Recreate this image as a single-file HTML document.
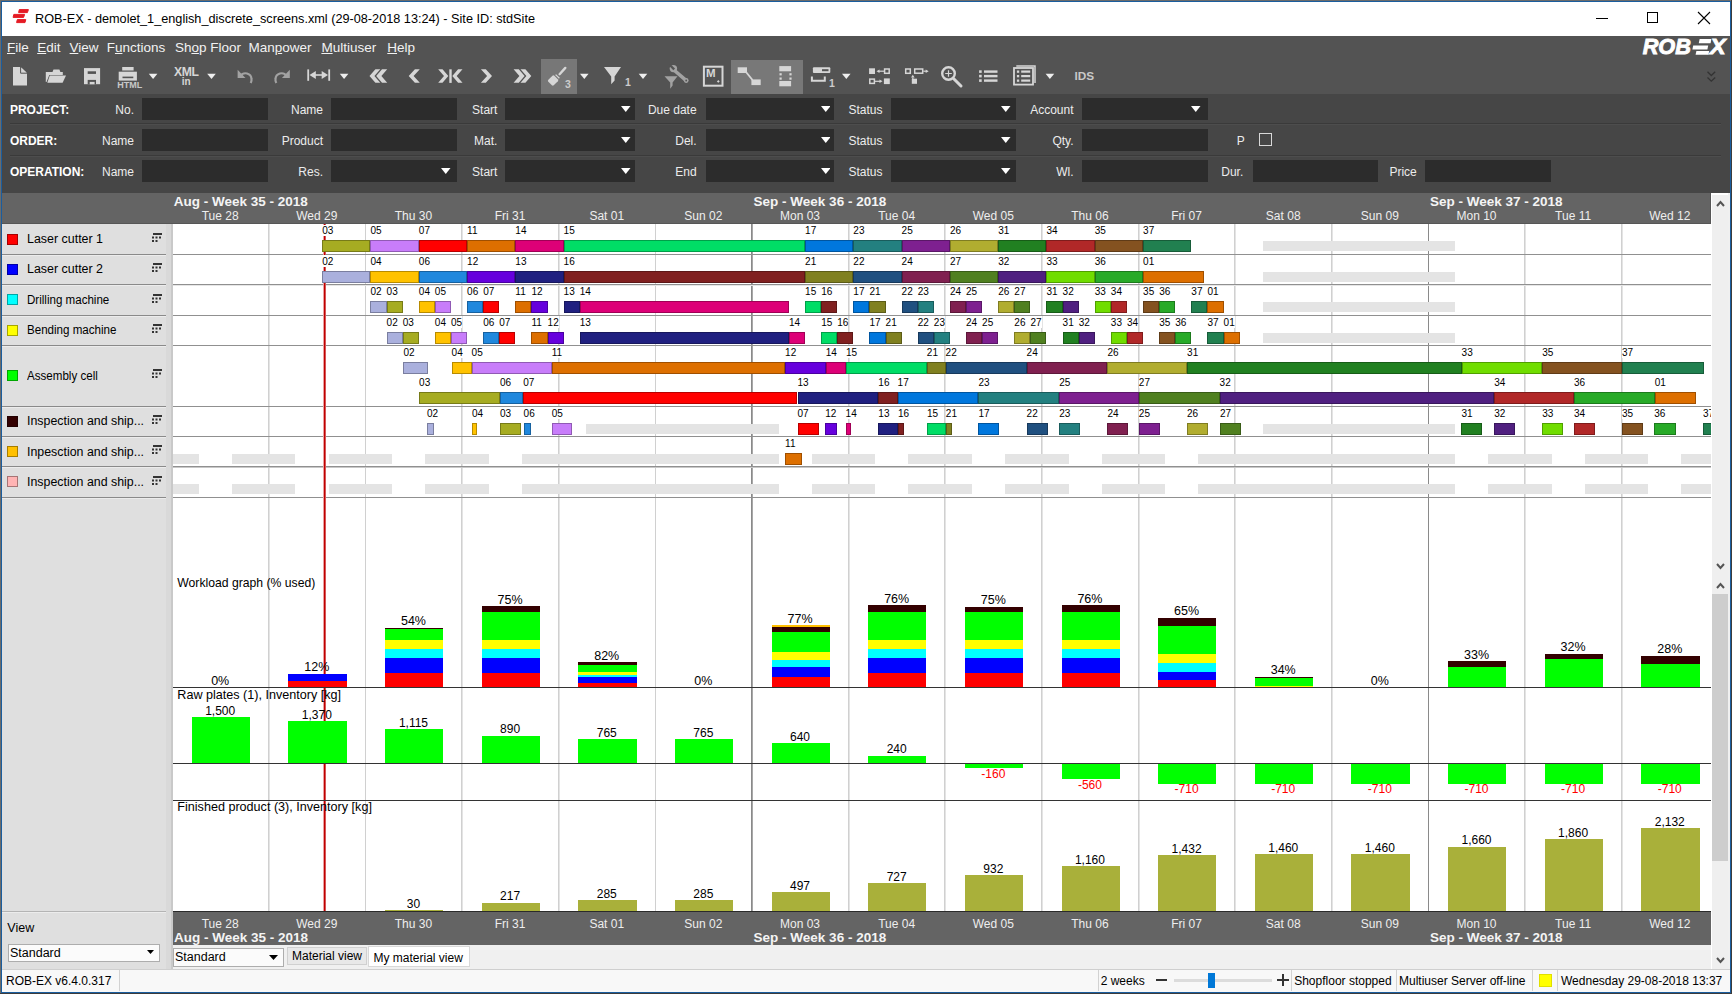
<!DOCTYPE html>
<html><head><meta charset="utf-8"><title>ROB-EX</title><style>
html,body{margin:0;padding:0;}
body{width:1732px;height:994px;overflow:hidden;position:relative;font-family:"Liberation Sans",sans-serif;}
div{position:absolute;box-sizing:border-box;}
.t{white-space:pre;line-height:1;}
</style></head><body>
<div style="left:0.00px;top:0.00px;width:1732.00px;height:994.00px;background:#f0f0f0;"></div>
<div style="left:2.00px;top:2.00px;width:1728.00px;height:34.00px;background:#ffffff;"></div>
<div style="left:2.00px;top:36.00px;width:1728.00px;height:58.00px;background:#535353;"></div>
<div style="left:2.00px;top:94.00px;width:1728.00px;height:99.00px;background:#464646;"></div>
<div style="left:2.00px;top:224.00px;width:164.00px;height:745.00px;background:#dfdfdf;"></div>
<div style="left:166.00px;top:224.00px;width:5.00px;height:745.00px;background:#d9d9d9;"></div>
<div style="left:171.00px;top:224.00px;width:2.00px;height:745.00px;background:#c9c9c9;"></div>
<div style="left:173.00px;top:224.00px;width:1538.00px;height:687.00px;background:#ffffff;"></div>
<div style="left:2.00px;top:193.00px;width:1709.00px;height:31.00px;background:#646464;"></div>
<div style="left:2.00px;top:223.00px;width:1709.00px;height:1.00px;background:#565656;"></div>
<div style="left:1710.00px;top:193.00px;width:1.00px;height:31.00px;background:#565656;"></div>
<svg style="position:absolute;left:0px;top:0px;" width="40" height="30" viewBox="0 0 40 30"><g fill="#e51b24" stroke="#e51b24" stroke-width="1" stroke-linejoin="round"><polygon points="19.3,9.6 28.4,9.6 27.4,12.6 18.6,12.6"/><polygon points="13.8,14.4 24.6,14.4 23.6,17.4 13.1,17.4"/><polygon points="17.3,19.6 25.8,19.6 25,22.6 16.6,22.6"/></g></svg>
<div class="t" style="left:35.00px;top:12.75px;font-size:12.7px;color:#000;font-weight:normal;">ROB-EX - demolet_1_english_discrete_screens.xml (29-08-2018 13:24) - Site ID: stdSite</div>
<div style="left:1596.00px;top:18.00px;width:12.00px;height:1.00px;background:#000;"></div>
<div style="left:1647.00px;top:12.00px;width:11.00px;height:11.00px;background:transparent;border:1px solid #000;"></div>
<svg style="position:absolute;left:1697px;top:11px;" width="14" height="14" viewBox="0 0 14 14"><path d="M1,1 L13,13 M13,1 L1,13" stroke="#000" stroke-width="1.1"/></svg>
<div class="t" style="left:7.00px;top:41.47px;font-size:13.5px;color:#f2f2f2;font-weight:normal;"><u>F</u>ile</div>
<div class="t" style="left:37.20px;top:41.47px;font-size:13.5px;color:#f2f2f2;font-weight:normal;"><u>E</u>dit</div>
<div class="t" style="left:69.60px;top:41.47px;font-size:13.5px;color:#f2f2f2;font-weight:normal;"><u>V</u>iew</div>
<div class="t" style="left:106.70px;top:41.47px;font-size:13.5px;color:#f2f2f2;font-weight:normal;">F<u>u</u>nctions</div>
<div class="t" style="left:174.90px;top:41.47px;font-size:13.5px;color:#f2f2f2;font-weight:normal;">Sh<u>o</u>p Floor</div>
<div class="t" style="left:248.40px;top:41.47px;font-size:13.5px;color:#f2f2f2;font-weight:normal;">Man<u>p</u>ower</div>
<div class="t" style="left:321.40px;top:41.47px;font-size:13.5px;color:#f2f2f2;font-weight:normal;"><u>M</u>ultiuser</div>
<div class="t" style="left:387.30px;top:41.47px;font-size:13.5px;color:#f2f2f2;font-weight:normal;"><u>H</u>elp</div>
<div style="left:10.00px;top:123.00px;width:1711.00px;height:1.00px;background:#3a3a3a;"></div>
<div style="left:10.00px;top:124.00px;width:1711.00px;height:1.00px;background:#4d4d4d;"></div>
<div style="left:10.00px;top:155.00px;width:1711.00px;height:1.00px;background:#3a3a3a;"></div>
<div style="left:10.00px;top:156.00px;width:1711.00px;height:1.00px;background:#4d4d4d;"></div>
<div class="t" style="left:9.90px;top:103.54px;font-size:12px;color:#ffffff;font-weight:bold;">PROJECT:</div>
<div class="t" style="left:9.90px;top:134.64px;font-size:12px;color:#ffffff;font-weight:bold;">ORDER:</div>
<div class="t" style="left:9.90px;top:166.34px;font-size:12px;color:#ffffff;font-weight:bold;">OPERATION:</div>
<div class="t" style="left:-166.00px;top:103.54px;width:300px;text-align:right;font-size:12px;color:#ececec;font-weight:normal;">No.</div>
<div style="left:142.40px;top:97.70px;width:126.10px;height:22.00px;background:#2c2c2c;"></div>
<div class="t" style="left:-166.00px;top:134.64px;width:300px;text-align:right;font-size:12px;color:#ececec;font-weight:normal;">Name</div>
<div style="left:142.40px;top:129.00px;width:126.10px;height:22.00px;background:#2c2c2c;"></div>
<div class="t" style="left:-166.00px;top:166.34px;width:300px;text-align:right;font-size:12px;color:#ececec;font-weight:normal;">Name</div>
<div style="left:142.40px;top:160.20px;width:126.10px;height:22.30px;background:#2c2c2c;"></div>
<div class="t" style="left:23.00px;top:103.54px;width:300px;text-align:right;font-size:12px;color:#ececec;font-weight:normal;">Name</div>
<div style="left:331.10px;top:97.70px;width:125.70px;height:22.00px;background:#2c2c2c;"></div>
<div class="t" style="left:23.00px;top:134.64px;width:300px;text-align:right;font-size:12px;color:#ececec;font-weight:normal;">Product</div>
<div style="left:331.10px;top:129.00px;width:125.70px;height:22.00px;background:#2c2c2c;"></div>
<div class="t" style="left:23.00px;top:166.34px;width:300px;text-align:right;font-size:12px;color:#ececec;font-weight:normal;">Res.</div>
<div style="left:331.10px;top:160.20px;width:125.70px;height:22.30px;background:#2c2c2c;"></div>
<svg style="position:absolute;left:441.3px;top:168.35px;" width="9.5" height="6" viewBox="0 0 9.5 6"><polygon points="0,0 9.5,0 4.75,6" fill="#ffffff"/></svg>
<div class="t" style="left:197.40px;top:103.54px;width:300px;text-align:right;font-size:12px;color:#ececec;font-weight:normal;">Start</div>
<div style="left:505.30px;top:97.70px;width:129.30px;height:22.00px;background:#2c2c2c;"></div>
<svg style="position:absolute;left:621.4px;top:105.7px;" width="9.5" height="6" viewBox="0 0 9.5 6"><polygon points="0,0 9.5,0 4.75,6" fill="#ffffff"/></svg>
<div class="t" style="left:197.40px;top:134.64px;width:300px;text-align:right;font-size:12px;color:#ececec;font-weight:normal;">Mat.</div>
<div style="left:505.30px;top:129.00px;width:129.30px;height:22.00px;background:#2c2c2c;"></div>
<svg style="position:absolute;left:621.4px;top:137.0px;" width="9.5" height="6" viewBox="0 0 9.5 6"><polygon points="0,0 9.5,0 4.75,6" fill="#ffffff"/></svg>
<div class="t" style="left:197.40px;top:166.34px;width:300px;text-align:right;font-size:12px;color:#ececec;font-weight:normal;">Start</div>
<div style="left:505.30px;top:160.20px;width:129.30px;height:22.30px;background:#2c2c2c;"></div>
<svg style="position:absolute;left:621.4px;top:168.35px;" width="9.5" height="6" viewBox="0 0 9.5 6"><polygon points="0,0 9.5,0 4.75,6" fill="#ffffff"/></svg>
<div class="t" style="left:396.60px;top:103.54px;width:300px;text-align:right;font-size:12px;color:#ececec;font-weight:normal;">Due date</div>
<div style="left:705.80px;top:97.70px;width:128.70px;height:22.00px;background:#2c2c2c;"></div>
<svg style="position:absolute;left:820.8px;top:105.7px;" width="9.5" height="6" viewBox="0 0 9.5 6"><polygon points="0,0 9.5,0 4.75,6" fill="#ffffff"/></svg>
<div class="t" style="left:396.60px;top:134.64px;width:300px;text-align:right;font-size:12px;color:#ececec;font-weight:normal;">Del.</div>
<div style="left:705.80px;top:129.00px;width:128.70px;height:22.00px;background:#2c2c2c;"></div>
<svg style="position:absolute;left:820.8px;top:137.0px;" width="9.5" height="6" viewBox="0 0 9.5 6"><polygon points="0,0 9.5,0 4.75,6" fill="#ffffff"/></svg>
<div class="t" style="left:396.60px;top:166.34px;width:300px;text-align:right;font-size:12px;color:#ececec;font-weight:normal;">End</div>
<div style="left:705.80px;top:160.20px;width:128.70px;height:22.30px;background:#2c2c2c;"></div>
<svg style="position:absolute;left:820.8px;top:168.35px;" width="9.5" height="6" viewBox="0 0 9.5 6"><polygon points="0,0 9.5,0 4.75,6" fill="#ffffff"/></svg>
<div class="t" style="left:582.50px;top:103.54px;width:300px;text-align:right;font-size:12px;color:#ececec;font-weight:normal;">Status</div>
<div style="left:891.00px;top:97.70px;width:125.40px;height:22.00px;background:#2c2c2c;"></div>
<svg style="position:absolute;left:1001.0px;top:105.7px;" width="9.5" height="6" viewBox="0 0 9.5 6"><polygon points="0,0 9.5,0 4.75,6" fill="#ffffff"/></svg>
<div class="t" style="left:582.50px;top:134.64px;width:300px;text-align:right;font-size:12px;color:#ececec;font-weight:normal;">Status</div>
<div style="left:891.00px;top:129.00px;width:125.40px;height:22.00px;background:#2c2c2c;"></div>
<svg style="position:absolute;left:1001.0px;top:137.0px;" width="9.5" height="6" viewBox="0 0 9.5 6"><polygon points="0,0 9.5,0 4.75,6" fill="#ffffff"/></svg>
<div class="t" style="left:582.50px;top:166.34px;width:300px;text-align:right;font-size:12px;color:#ececec;font-weight:normal;">Status</div>
<div style="left:891.00px;top:160.20px;width:125.40px;height:22.30px;background:#2c2c2c;"></div>
<svg style="position:absolute;left:1001.0px;top:168.35px;" width="9.5" height="6" viewBox="0 0 9.5 6"><polygon points="0,0 9.5,0 4.75,6" fill="#ffffff"/></svg>
<div class="t" style="left:773.50px;top:103.54px;width:300px;text-align:right;font-size:12px;color:#ececec;font-weight:normal;">Account</div>
<div style="left:1082.00px;top:97.70px;width:125.50px;height:22.00px;background:#2c2c2c;"></div>
<svg style="position:absolute;left:1191.3px;top:105.7px;" width="9.5" height="6" viewBox="0 0 9.5 6"><polygon points="0,0 9.5,0 4.75,6" fill="#ffffff"/></svg>
<div class="t" style="left:773.50px;top:134.64px;width:300px;text-align:right;font-size:12px;color:#ececec;font-weight:normal;">Qty.</div>
<div style="left:1082.00px;top:129.00px;width:125.50px;height:22.00px;background:#2c2c2c;"></div>
<div class="t" style="left:773.50px;top:166.34px;width:300px;text-align:right;font-size:12px;color:#ececec;font-weight:normal;">Wl.</div>
<div style="left:1082.00px;top:160.20px;width:125.50px;height:22.30px;background:#2c2c2c;"></div>
<div class="t" style="left:1236.80px;top:134.64px;font-size:12px;color:#ececec;font-weight:normal;">P</div>
<div style="left:1259.00px;top:133.00px;width:13.00px;height:13.00px;background:transparent;border:1px solid #d8d8d8;"></div>
<div class="t" style="left:943.30px;top:166.34px;width:300px;text-align:right;font-size:12px;color:#ececec;font-weight:normal;">Dur.</div>
<div style="left:1252.50px;top:160.20px;width:125.90px;height:22.30px;background:#2c2c2c;"></div>
<div class="t" style="left:1116.80px;top:166.34px;width:300px;text-align:right;font-size:12px;color:#ececec;font-weight:normal;">Price</div>
<div style="left:1425.40px;top:160.20px;width:125.90px;height:22.30px;background:#2c2c2c;"></div>
<div class="t" style="left:70.18px;top:210.24px;width:300px;text-align:center;font-size:12px;color:#eeeeee;font-weight:normal;">Tue 28</div>
<div class="t" style="left:166.82px;top:210.24px;width:300px;text-align:center;font-size:12px;color:#eeeeee;font-weight:normal;">Wed 29</div>
<div class="t" style="left:263.46px;top:210.24px;width:300px;text-align:center;font-size:12px;color:#eeeeee;font-weight:normal;">Thu 30</div>
<div class="t" style="left:360.10px;top:210.24px;width:300px;text-align:center;font-size:12px;color:#eeeeee;font-weight:normal;">Fri 31</div>
<div class="t" style="left:456.74px;top:210.24px;width:300px;text-align:center;font-size:12px;color:#eeeeee;font-weight:normal;">Sat 01</div>
<div class="t" style="left:553.38px;top:210.24px;width:300px;text-align:center;font-size:12px;color:#eeeeee;font-weight:normal;">Sun 02</div>
<div class="t" style="left:650.02px;top:210.24px;width:300px;text-align:center;font-size:12px;color:#eeeeee;font-weight:normal;">Mon 03</div>
<div class="t" style="left:746.66px;top:210.24px;width:300px;text-align:center;font-size:12px;color:#eeeeee;font-weight:normal;">Tue 04</div>
<div class="t" style="left:843.30px;top:210.24px;width:300px;text-align:center;font-size:12px;color:#eeeeee;font-weight:normal;">Wed 05</div>
<div class="t" style="left:939.94px;top:210.24px;width:300px;text-align:center;font-size:12px;color:#eeeeee;font-weight:normal;">Thu 06</div>
<div class="t" style="left:1036.58px;top:210.24px;width:300px;text-align:center;font-size:12px;color:#eeeeee;font-weight:normal;">Fri 07</div>
<div class="t" style="left:1133.22px;top:210.24px;width:300px;text-align:center;font-size:12px;color:#eeeeee;font-weight:normal;">Sat 08</div>
<div class="t" style="left:1229.86px;top:210.24px;width:300px;text-align:center;font-size:12px;color:#eeeeee;font-weight:normal;">Sun 09</div>
<div class="t" style="left:1326.50px;top:210.24px;width:300px;text-align:center;font-size:12px;color:#eeeeee;font-weight:normal;">Mon 10</div>
<div class="t" style="left:1423.14px;top:210.24px;width:300px;text-align:center;font-size:12px;color:#eeeeee;font-weight:normal;">Tue 11</div>
<div class="t" style="left:1519.78px;top:210.24px;width:300px;text-align:center;font-size:12px;color:#eeeeee;font-weight:normal;">Wed 12</div>
<div class="t" style="left:173.70px;top:194.57px;font-size:13.5px;color:#f4f4f4;font-weight:bold;">Aug - Week 35 - 2018</div>
<div class="t" style="left:753.60px;top:194.57px;font-size:13.5px;color:#f4f4f4;font-weight:bold;">Sep - Week 36 - 2018</div>
<div class="t" style="left:1430.00px;top:194.57px;font-size:13.5px;color:#f4f4f4;font-weight:bold;">Sep - Week 37 - 2018</div>
<div style="left:268.00px;top:224.00px;width:1.00px;height:687.00px;background:#d0d0d0;"></div>
<div style="left:269.00px;top:224.00px;width:1.00px;height:687.00px;background:#e4e4e4;"></div>
<div style="left:365.00px;top:224.00px;width:1.00px;height:687.00px;background:#d0d0d0;"></div>
<div style="left:461.00px;top:224.00px;width:1.00px;height:687.00px;background:#d0d0d0;"></div>
<div style="left:462.00px;top:224.00px;width:1.00px;height:687.00px;background:#e4e4e4;"></div>
<div style="left:558.00px;top:224.00px;width:1.00px;height:687.00px;background:#d0d0d0;"></div>
<div style="left:559.00px;top:224.00px;width:1.00px;height:687.00px;background:#e4e4e4;"></div>
<div style="left:655.00px;top:224.00px;width:1.00px;height:687.00px;background:#d0d0d0;"></div>
<div style="left:751.00px;top:224.00px;width:1.00px;height:687.00px;background:#8a8a8a;"></div>
<div style="left:752.00px;top:224.00px;width:1.00px;height:687.00px;background:#a8a8a8;"></div>
<div style="left:848.00px;top:224.00px;width:1.00px;height:687.00px;background:#d0d0d0;"></div>
<div style="left:849.00px;top:224.00px;width:1.00px;height:687.00px;background:#e4e4e4;"></div>
<div style="left:944.00px;top:224.00px;width:1.00px;height:687.00px;background:#d0d0d0;"></div>
<div style="left:945.00px;top:224.00px;width:1.00px;height:687.00px;background:#e4e4e4;"></div>
<div style="left:1041.00px;top:224.00px;width:1.00px;height:687.00px;background:#d0d0d0;"></div>
<div style="left:1042.00px;top:224.00px;width:1.00px;height:687.00px;background:#e4e4e4;"></div>
<div style="left:1138.00px;top:224.00px;width:1.00px;height:687.00px;background:#d0d0d0;"></div>
<div style="left:1139.00px;top:224.00px;width:1.00px;height:687.00px;background:#e4e4e4;"></div>
<div style="left:1234.00px;top:224.00px;width:1.00px;height:687.00px;background:#d0d0d0;"></div>
<div style="left:1235.00px;top:224.00px;width:1.00px;height:687.00px;background:#e4e4e4;"></div>
<div style="left:1331.00px;top:224.00px;width:1.00px;height:687.00px;background:#d0d0d0;"></div>
<div style="left:1332.00px;top:224.00px;width:1.00px;height:687.00px;background:#e4e4e4;"></div>
<div style="left:1428.00px;top:224.00px;width:1.00px;height:687.00px;background:#8a8a8a;"></div>
<div style="left:1524.00px;top:224.00px;width:1.00px;height:687.00px;background:#d0d0d0;"></div>
<div style="left:1525.00px;top:224.00px;width:1.00px;height:687.00px;background:#e4e4e4;"></div>
<div style="left:1621.00px;top:224.00px;width:1.00px;height:687.00px;background:#d0d0d0;"></div>
<div style="left:1622.00px;top:224.00px;width:1.00px;height:687.00px;background:#e4e4e4;"></div>
<div style="left:173.00px;top:285.00px;width:1538.00px;height:1.00px;background:#e6e6e6;"></div>
<div style="left:173.00px;top:467.00px;width:1538.00px;height:1.00px;background:#c8c8c8;"></div>
<div style="left:173.00px;top:254.00px;width:1538.00px;height:1.00px;background:#909090;"></div>
<div style="left:2.00px;top:254.00px;width:164.00px;height:1.00px;background:#8a8a8a;"></div>
<div style="left:2.00px;top:255.00px;width:164.00px;height:1.00px;background:#ececec;"></div>
<div style="left:173.00px;top:284.00px;width:1538.00px;height:1.00px;background:#909090;"></div>
<div style="left:2.00px;top:284.00px;width:164.00px;height:1.00px;background:#8a8a8a;"></div>
<div style="left:2.00px;top:285.00px;width:164.00px;height:1.00px;background:#ececec;"></div>
<div style="left:173.00px;top:315.00px;width:1538.00px;height:1.00px;background:#909090;"></div>
<div style="left:2.00px;top:315.00px;width:164.00px;height:1.00px;background:#8a8a8a;"></div>
<div style="left:2.00px;top:316.00px;width:164.00px;height:1.00px;background:#ececec;"></div>
<div style="left:173.00px;top:345.00px;width:1538.00px;height:1.00px;background:#909090;"></div>
<div style="left:2.00px;top:345.00px;width:164.00px;height:1.00px;background:#8a8a8a;"></div>
<div style="left:2.00px;top:346.00px;width:164.00px;height:1.00px;background:#ececec;"></div>
<div style="left:173.00px;top:406.00px;width:1538.00px;height:1.00px;background:#909090;"></div>
<div style="left:2.00px;top:406.00px;width:164.00px;height:1.00px;background:#8a8a8a;"></div>
<div style="left:2.00px;top:407.00px;width:164.00px;height:1.00px;background:#ececec;"></div>
<div style="left:173.00px;top:436.00px;width:1538.00px;height:1.00px;background:#909090;"></div>
<div style="left:2.00px;top:436.00px;width:164.00px;height:1.00px;background:#8a8a8a;"></div>
<div style="left:2.00px;top:437.00px;width:164.00px;height:1.00px;background:#ececec;"></div>
<div style="left:173.00px;top:466.00px;width:1538.00px;height:1.00px;background:#909090;"></div>
<div style="left:2.00px;top:466.00px;width:164.00px;height:1.00px;background:#8a8a8a;"></div>
<div style="left:2.00px;top:467.00px;width:164.00px;height:1.00px;background:#ececec;"></div>
<div style="left:173.00px;top:497.00px;width:1538.00px;height:1.00px;background:#909090;"></div>
<div style="left:2.00px;top:497.00px;width:164.00px;height:1.00px;background:#8a8a8a;"></div>
<div style="left:2.00px;top:498.00px;width:164.00px;height:1.00px;background:#ececec;"></div>
<div style="left:7.00px;top:233.50px;width:11.00px;height:11.00px;background:#ff0000;border:1px solid rgba(0,0,0,0.35);"></div>
<div class="t" style="left:26.80px;top:233.42px;font-size:12.5px;color:#000;font-weight:normal;transform:scaleX(0.9945);transform-origin:0 0;">Laser cutter 1</div>
<svg style="position:absolute;left:152px;top:233px;" width="10" height="10" viewBox="0 0 10 10"><rect x="1" y="0" width="9" height="2" fill="#333"/><rect x="0" y="3.5" width="2" height="2" fill="#333"/><rect x="3.5" y="3.5" width="2" height="2" fill="#333"/><rect x="7" y="3.5" width="2" height="2" fill="#333"/><rect x="0" y="7" width="2" height="2" fill="#333"/><rect x="3.5" y="7" width="2" height="2" fill="#333"/></svg>
<div style="left:7.00px;top:263.50px;width:11.00px;height:11.00px;background:#0000ff;border:1px solid rgba(0,0,0,0.35);"></div>
<div class="t" style="left:26.80px;top:263.42px;font-size:12.5px;color:#000;font-weight:normal;transform:scaleX(0.9945);transform-origin:0 0;">Laser cutter 2</div>
<svg style="position:absolute;left:152px;top:263px;" width="10" height="10" viewBox="0 0 10 10"><rect x="1" y="0" width="9" height="2" fill="#333"/><rect x="0" y="3.5" width="2" height="2" fill="#333"/><rect x="3.5" y="3.5" width="2" height="2" fill="#333"/><rect x="7" y="3.5" width="2" height="2" fill="#333"/><rect x="0" y="7" width="2" height="2" fill="#333"/><rect x="3.5" y="7" width="2" height="2" fill="#333"/></svg>
<div style="left:7.00px;top:294.00px;width:11.00px;height:11.00px;background:#00ffff;border:1px solid rgba(0,0,0,0.35);"></div>
<div class="t" style="left:26.80px;top:293.92px;font-size:12.5px;color:#000;font-weight:normal;transform:scaleX(0.9256);transform-origin:0 0;">Drilling machine</div>
<svg style="position:absolute;left:152px;top:294px;" width="10" height="10" viewBox="0 0 10 10"><rect x="1" y="0" width="9" height="2" fill="#333"/><rect x="0" y="3.5" width="2" height="2" fill="#333"/><rect x="3.5" y="3.5" width="2" height="2" fill="#333"/><rect x="7" y="3.5" width="2" height="2" fill="#333"/><rect x="0" y="7" width="2" height="2" fill="#333"/><rect x="3.5" y="7" width="2" height="2" fill="#333"/></svg>
<div style="left:7.00px;top:324.50px;width:11.00px;height:11.00px;background:#ffff00;border:1px solid rgba(0,0,0,0.35);"></div>
<div class="t" style="left:26.80px;top:324.42px;font-size:12.5px;color:#000;font-weight:normal;transform:scaleX(0.9266);transform-origin:0 0;">Bending machine</div>
<svg style="position:absolute;left:152px;top:324px;" width="10" height="10" viewBox="0 0 10 10"><rect x="1" y="0" width="9" height="2" fill="#333"/><rect x="0" y="3.5" width="2" height="2" fill="#333"/><rect x="3.5" y="3.5" width="2" height="2" fill="#333"/><rect x="7" y="3.5" width="2" height="2" fill="#333"/><rect x="0" y="7" width="2" height="2" fill="#333"/><rect x="3.5" y="7" width="2" height="2" fill="#333"/></svg>
<div style="left:7.00px;top:369.70px;width:11.00px;height:11.00px;background:#00ff00;border:1px solid rgba(0,0,0,0.35);"></div>
<div class="t" style="left:26.80px;top:369.62px;font-size:12.5px;color:#000;font-weight:normal;transform:scaleX(0.9266);transform-origin:0 0;">Assembly cell</div>
<svg style="position:absolute;left:152px;top:369px;" width="10" height="10" viewBox="0 0 10 10"><rect x="1" y="0" width="9" height="2" fill="#333"/><rect x="0" y="3.5" width="2" height="2" fill="#333"/><rect x="3.5" y="3.5" width="2" height="2" fill="#333"/><rect x="7" y="3.5" width="2" height="2" fill="#333"/><rect x="0" y="7" width="2" height="2" fill="#333"/><rect x="3.5" y="7" width="2" height="2" fill="#333"/></svg>
<div style="left:7.00px;top:415.50px;width:11.00px;height:11.00px;background:#330000;border:1px solid rgba(0,0,0,0.35);"></div>
<div class="t" style="left:26.80px;top:415.42px;font-size:12.5px;color:#000;font-weight:normal;transform:scaleX(0.9905);transform-origin:0 0;">Inspection and ship...</div>
<svg style="position:absolute;left:152px;top:415px;" width="10" height="10" viewBox="0 0 10 10"><rect x="1" y="0" width="9" height="2" fill="#333"/><rect x="0" y="3.5" width="2" height="2" fill="#333"/><rect x="3.5" y="3.5" width="2" height="2" fill="#333"/><rect x="7" y="3.5" width="2" height="2" fill="#333"/><rect x="0" y="7" width="2" height="2" fill="#333"/><rect x="3.5" y="7" width="2" height="2" fill="#333"/></svg>
<div style="left:7.00px;top:445.80px;width:11.00px;height:11.00px;background:#ffc000;border:1px solid rgba(0,0,0,0.35);"></div>
<div class="t" style="left:26.80px;top:445.72px;font-size:12.5px;color:#000;font-weight:normal;transform:scaleX(0.9905);transform-origin:0 0;">Inpesction and ship...</div>
<svg style="position:absolute;left:152px;top:445px;" width="10" height="10" viewBox="0 0 10 10"><rect x="1" y="0" width="9" height="2" fill="#333"/><rect x="0" y="3.5" width="2" height="2" fill="#333"/><rect x="3.5" y="3.5" width="2" height="2" fill="#333"/><rect x="7" y="3.5" width="2" height="2" fill="#333"/><rect x="0" y="7" width="2" height="2" fill="#333"/><rect x="3.5" y="7" width="2" height="2" fill="#333"/></svg>
<div style="left:7.00px;top:476.20px;width:11.00px;height:11.00px;background:#ffb4b4;border:1px solid rgba(0,0,0,0.35);"></div>
<div class="t" style="left:26.80px;top:476.12px;font-size:12.5px;color:#000;font-weight:normal;transform:scaleX(0.9905);transform-origin:0 0;">Inspection and ship...</div>
<svg style="position:absolute;left:152px;top:476px;" width="10" height="10" viewBox="0 0 10 10"><rect x="1" y="0" width="9" height="2" fill="#333"/><rect x="0" y="3.5" width="2" height="2" fill="#333"/><rect x="3.5" y="3.5" width="2" height="2" fill="#333"/><rect x="7" y="3.5" width="2" height="2" fill="#333"/><rect x="0" y="7" width="2" height="2" fill="#333"/><rect x="3.5" y="7" width="2" height="2" fill="#333"/></svg>
<div style="left:323.00px;top:224.00px;width:1.00px;height:687.00px;background:#eaa0a0;"></div>
<div style="left:324.00px;top:224.00px;width:1.00px;height:687.00px;background:#c00000;"></div>
<div style="left:325.00px;top:224.00px;width:1.00px;height:687.00px;background:#d65858;"></div>
<div style="left:1262.90px;top:241.00px;width:192.28px;height:10.00px;background:#e4e4e4;"></div>
<div style="left:322.20px;top:240.00px;width:48.29px;height:12.00px;background:#a6ac22;border:1px solid #777b18;"></div>
<div class="t" style="left:322.20px;top:224.70px;height:11.5px;padding-top:1.5px;background:#fff;font-size:10px;color:#000;letter-spacing:0.05px">03</div>
<div style="left:370.49px;top:240.00px;width:48.28px;height:12.00px;background:#c87dfa;border:1px solid #905ab4;"></div>
<div class="t" style="left:370.49px;top:224.70px;height:11.5px;padding-top:1.5px;background:#fff;font-size:10px;color:#000;letter-spacing:0.05px">05</div>
<div style="left:418.77px;top:240.00px;width:48.28px;height:12.00px;background:#ff0000;border:1px solid #b70000;"></div>
<div class="t" style="left:418.77px;top:224.70px;height:11.5px;padding-top:1.5px;background:#fff;font-size:10px;color:#000;letter-spacing:0.05px">07</div>
<div style="left:467.05px;top:240.00px;width:48.28px;height:12.00px;background:#dd6f00;border:1px solid #9f4f00;"></div>
<div class="t" style="left:467.05px;top:224.70px;height:11.5px;padding-top:1.5px;background:#fff;font-size:10px;color:#000;letter-spacing:0.05px">11</div>
<div style="left:515.34px;top:240.00px;width:48.29px;height:12.00px;background:#dd0077;border:1px solid #9f0055;"></div>
<div class="t" style="left:515.34px;top:224.70px;height:11.5px;padding-top:1.5px;background:#fff;font-size:10px;color:#000;letter-spacing:0.05px">14</div>
<div style="left:563.62px;top:240.00px;width:241.42px;height:12.00px;background:#00dd66;border:1px solid #009f49;"></div>
<div class="t" style="left:563.62px;top:224.70px;height:11.5px;padding-top:1.5px;background:#fff;font-size:10px;color:#000;letter-spacing:0.05px">15</div>
<div style="left:805.05px;top:240.00px;width:48.29px;height:12.00px;background:#0077dd;border:1px solid #00559f;"></div>
<div class="t" style="left:805.05px;top:224.70px;height:11.5px;padding-top:1.5px;background:#fff;font-size:10px;color:#000;letter-spacing:0.05px">17</div>
<div style="left:853.34px;top:240.00px;width:48.28px;height:12.00px;background:#238080;border:1px solid #195c5c;"></div>
<div class="t" style="left:853.34px;top:224.70px;height:11.5px;padding-top:1.5px;background:#fff;font-size:10px;color:#000;letter-spacing:0.05px">23</div>
<div style="left:901.62px;top:240.00px;width:48.29px;height:12.00px;background:#7e2090;border:1px solid #5a1767;"></div>
<div class="t" style="left:901.62px;top:224.70px;height:11.5px;padding-top:1.5px;background:#fff;font-size:10px;color:#000;letter-spacing:0.05px">25</div>
<div style="left:949.90px;top:240.00px;width:48.29px;height:12.00px;background:#b1ad30;border:1px solid #7f7c22;"></div>
<div class="t" style="left:949.90px;top:224.70px;height:11.5px;padding-top:1.5px;background:#fff;font-size:10px;color:#000;letter-spacing:0.05px">26</div>
<div style="left:998.19px;top:240.00px;width:48.28px;height:12.00px;background:#218021;border:1px solid #175c17;"></div>
<div class="t" style="left:998.19px;top:224.70px;height:11.5px;padding-top:1.5px;background:#fff;font-size:10px;color:#000;letter-spacing:0.05px">31</div>
<div style="left:1046.47px;top:240.00px;width:48.29px;height:12.00px;background:#b12828;border:1px solid #7f1c1c;"></div>
<div class="t" style="left:1046.47px;top:224.70px;height:11.5px;padding-top:1.5px;background:#fff;font-size:10px;color:#000;letter-spacing:0.05px">34</div>
<div style="left:1094.76px;top:240.00px;width:48.28px;height:12.00px;background:#845220;border:1px solid #5f3b17;"></div>
<div class="t" style="left:1094.76px;top:224.70px;height:11.5px;padding-top:1.5px;background:#fff;font-size:10px;color:#000;letter-spacing:0.05px">35</div>
<div style="left:1143.04px;top:240.00px;width:48.29px;height:12.00px;background:#218050;border:1px solid #175c39;"></div>
<div class="t" style="left:1143.04px;top:224.70px;height:11.5px;padding-top:1.5px;background:#fff;font-size:10px;color:#000;letter-spacing:0.05px">37</div>
<div style="left:1262.90px;top:271.50px;width:192.28px;height:10.00px;background:#e4e4e4;"></div>
<div style="left:322.20px;top:270.50px;width:48.29px;height:12.00px;background:#aab0dd;border:1px solid #7a7e9f;"></div>
<div class="t" style="left:322.20px;top:255.20px;height:11.5px;padding-top:1.5px;background:#fff;font-size:10px;color:#000;letter-spacing:0.05px">02</div>
<div style="left:370.49px;top:270.50px;width:48.28px;height:12.00px;background:#ffc200;border:1px solid #b78b00;"></div>
<div class="t" style="left:370.49px;top:255.20px;height:11.5px;padding-top:1.5px;background:#fff;font-size:10px;color:#000;letter-spacing:0.05px">04</div>
<div style="left:418.77px;top:270.50px;width:48.28px;height:12.00px;background:#2088dd;border:1px solid #17619f;"></div>
<div class="t" style="left:418.77px;top:255.20px;height:11.5px;padding-top:1.5px;background:#fff;font-size:10px;color:#000;letter-spacing:0.05px">06</div>
<div style="left:467.05px;top:270.50px;width:48.28px;height:12.00px;background:#6600dd;border:1px solid #49009f;"></div>
<div class="t" style="left:467.05px;top:255.20px;height:11.5px;padding-top:1.5px;background:#fff;font-size:10px;color:#000;letter-spacing:0.05px">12</div>
<div style="left:515.34px;top:270.50px;width:48.29px;height:12.00px;background:#202080;border:1px solid #17175c;"></div>
<div class="t" style="left:515.34px;top:255.20px;height:11.5px;padding-top:1.5px;background:#fff;font-size:10px;color:#000;letter-spacing:0.05px">13</div>
<div style="left:563.62px;top:270.50px;width:241.42px;height:12.00px;background:#802020;border:1px solid #5c1717;"></div>
<div class="t" style="left:563.62px;top:255.20px;height:11.5px;padding-top:1.5px;background:#fff;font-size:10px;color:#000;letter-spacing:0.05px">16</div>
<div style="left:805.05px;top:270.50px;width:48.29px;height:12.00px;background:#808020;border:1px solid #5c5c17;"></div>
<div class="t" style="left:805.05px;top:255.20px;height:11.5px;padding-top:1.5px;background:#fff;font-size:10px;color:#000;letter-spacing:0.05px">21</div>
<div style="left:853.34px;top:270.50px;width:48.28px;height:12.00px;background:#205080;border:1px solid #17395c;"></div>
<div class="t" style="left:853.34px;top:255.20px;height:11.5px;padding-top:1.5px;background:#fff;font-size:10px;color:#000;letter-spacing:0.05px">22</div>
<div style="left:901.62px;top:270.50px;width:48.29px;height:12.00px;background:#802050;border:1px solid #5c1739;"></div>
<div class="t" style="left:901.62px;top:255.20px;height:11.5px;padding-top:1.5px;background:#fff;font-size:10px;color:#000;letter-spacing:0.05px">24</div>
<div style="left:949.90px;top:270.50px;width:48.29px;height:12.00px;background:#508020;border:1px solid #395c17;"></div>
<div class="t" style="left:949.90px;top:255.20px;height:11.5px;padding-top:1.5px;background:#fff;font-size:10px;color:#000;letter-spacing:0.05px">27</div>
<div style="left:998.19px;top:270.50px;width:48.28px;height:12.00px;background:#502080;border:1px solid #39175c;"></div>
<div class="t" style="left:998.19px;top:255.20px;height:11.5px;padding-top:1.5px;background:#fff;font-size:10px;color:#000;letter-spacing:0.05px">32</div>
<div style="left:1046.47px;top:270.50px;width:48.29px;height:12.00px;background:#70dd00;border:1px solid #509f00;"></div>
<div class="t" style="left:1046.47px;top:255.20px;height:11.5px;padding-top:1.5px;background:#fff;font-size:10px;color:#000;letter-spacing:0.05px">33</div>
<div style="left:1094.76px;top:270.50px;width:48.28px;height:12.00px;background:#28aa28;border:1px solid #1c7a1c;"></div>
<div class="t" style="left:1094.76px;top:255.20px;height:11.5px;padding-top:1.5px;background:#fff;font-size:10px;color:#000;letter-spacing:0.05px">36</div>
<div style="left:1143.04px;top:270.50px;width:61.32px;height:12.00px;background:#dd6f00;border:1px solid #9f4f00;"></div>
<div class="t" style="left:1143.04px;top:255.20px;height:11.5px;padding-top:1.5px;background:#fff;font-size:10px;color:#000;letter-spacing:0.05px">01</div>
<div style="left:1262.90px;top:302.00px;width:192.28px;height:10.00px;background:#e4e4e4;"></div>
<div style="left:370.49px;top:301.00px;width:16.10px;height:12.00px;background:#aab0dd;border:1px solid #7a7e9f;"></div>
<div class="t" style="left:370.49px;top:285.70px;height:11.5px;padding-top:1.5px;background:#fff;font-size:10px;color:#000;letter-spacing:0.05px">02</div>
<div style="left:386.58px;top:301.00px;width:16.09px;height:12.00px;background:#a6ac22;border:1px solid #777b18;"></div>
<div class="t" style="left:386.58px;top:285.70px;height:11.5px;padding-top:1.5px;background:#fff;font-size:10px;color:#000;letter-spacing:0.05px">03</div>
<div style="left:418.77px;top:301.00px;width:16.10px;height:12.00px;background:#ffc200;border:1px solid #b78b00;"></div>
<div class="t" style="left:418.77px;top:285.70px;height:11.5px;padding-top:1.5px;background:#fff;font-size:10px;color:#000;letter-spacing:0.05px">04</div>
<div style="left:434.87px;top:301.00px;width:16.09px;height:12.00px;background:#c87dfa;border:1px solid #905ab4;"></div>
<div class="t" style="left:434.87px;top:285.70px;height:11.5px;padding-top:1.5px;background:#fff;font-size:10px;color:#000;letter-spacing:0.05px">05</div>
<div style="left:467.05px;top:301.00px;width:16.10px;height:12.00px;background:#2088dd;border:1px solid #17619f;"></div>
<div class="t" style="left:467.05px;top:285.70px;height:11.5px;padding-top:1.5px;background:#fff;font-size:10px;color:#000;letter-spacing:0.05px">06</div>
<div style="left:483.15px;top:301.00px;width:16.09px;height:12.00px;background:#ff0000;border:1px solid #b70000;"></div>
<div class="t" style="left:483.15px;top:285.70px;height:11.5px;padding-top:1.5px;background:#fff;font-size:10px;color:#000;letter-spacing:0.05px">07</div>
<div style="left:515.34px;top:301.00px;width:16.10px;height:12.00px;background:#dd6f00;border:1px solid #9f4f00;"></div>
<div class="t" style="left:515.34px;top:285.70px;height:11.5px;padding-top:1.5px;background:#fff;font-size:10px;color:#000;letter-spacing:0.05px">11</div>
<div style="left:531.43px;top:301.00px;width:16.10px;height:12.00px;background:#6600dd;border:1px solid #49009f;"></div>
<div class="t" style="left:531.43px;top:285.70px;height:11.5px;padding-top:1.5px;background:#fff;font-size:10px;color:#000;letter-spacing:0.05px">12</div>
<div style="left:563.62px;top:301.00px;width:16.10px;height:12.00px;background:#202080;border:1px solid #17175c;"></div>
<div class="t" style="left:563.62px;top:285.70px;height:11.5px;padding-top:1.5px;background:#fff;font-size:10px;color:#000;letter-spacing:0.05px">13</div>
<div style="left:579.72px;top:301.00px;width:209.23px;height:12.00px;background:#dd0077;border:1px solid #9f0055;"></div>
<div class="t" style="left:579.72px;top:285.70px;height:11.5px;padding-top:1.5px;background:#fff;font-size:10px;color:#000;letter-spacing:0.05px">14</div>
<div style="left:805.05px;top:301.00px;width:16.10px;height:12.00px;background:#00dd66;border:1px solid #009f49;"></div>
<div class="t" style="left:805.05px;top:285.70px;height:11.5px;padding-top:1.5px;background:#fff;font-size:10px;color:#000;letter-spacing:0.05px">15</div>
<div style="left:821.14px;top:301.00px;width:16.10px;height:12.00px;background:#802020;border:1px solid #5c1717;"></div>
<div class="t" style="left:821.14px;top:285.70px;height:11.5px;padding-top:1.5px;background:#fff;font-size:10px;color:#000;letter-spacing:0.05px">16</div>
<div style="left:853.34px;top:301.00px;width:16.10px;height:12.00px;background:#0077dd;border:1px solid #00559f;"></div>
<div class="t" style="left:853.34px;top:285.70px;height:11.5px;padding-top:1.5px;background:#fff;font-size:10px;color:#000;letter-spacing:0.05px">17</div>
<div style="left:869.43px;top:301.00px;width:16.10px;height:12.00px;background:#808020;border:1px solid #5c5c17;"></div>
<div class="t" style="left:869.43px;top:285.70px;height:11.5px;padding-top:1.5px;background:#fff;font-size:10px;color:#000;letter-spacing:0.05px">21</div>
<div style="left:901.62px;top:301.00px;width:16.10px;height:12.00px;background:#205080;border:1px solid #17395c;"></div>
<div class="t" style="left:901.62px;top:285.70px;height:11.5px;padding-top:1.5px;background:#fff;font-size:10px;color:#000;letter-spacing:0.05px">22</div>
<div style="left:917.71px;top:301.00px;width:16.10px;height:12.00px;background:#238080;border:1px solid #195c5c;"></div>
<div class="t" style="left:917.71px;top:285.70px;height:11.5px;padding-top:1.5px;background:#fff;font-size:10px;color:#000;letter-spacing:0.05px">23</div>
<div style="left:949.90px;top:301.00px;width:16.10px;height:12.00px;background:#802050;border:1px solid #5c1739;"></div>
<div class="t" style="left:949.90px;top:285.70px;height:11.5px;padding-top:1.5px;background:#fff;font-size:10px;color:#000;letter-spacing:0.05px">24</div>
<div style="left:966.00px;top:301.00px;width:16.10px;height:12.00px;background:#7e2090;border:1px solid #5a1767;"></div>
<div class="t" style="left:966.00px;top:285.70px;height:11.5px;padding-top:1.5px;background:#fff;font-size:10px;color:#000;letter-spacing:0.05px">25</div>
<div style="left:998.19px;top:301.00px;width:16.10px;height:12.00px;background:#b1ad30;border:1px solid #7f7c22;"></div>
<div class="t" style="left:998.19px;top:285.70px;height:11.5px;padding-top:1.5px;background:#fff;font-size:10px;color:#000;letter-spacing:0.05px">26</div>
<div style="left:1014.29px;top:301.00px;width:16.10px;height:12.00px;background:#508020;border:1px solid #395c17;"></div>
<div class="t" style="left:1014.29px;top:285.70px;height:11.5px;padding-top:1.5px;background:#fff;font-size:10px;color:#000;letter-spacing:0.05px">27</div>
<div style="left:1046.47px;top:301.00px;width:16.10px;height:12.00px;background:#218021;border:1px solid #175c17;"></div>
<div class="t" style="left:1046.47px;top:285.70px;height:11.5px;padding-top:1.5px;background:#fff;font-size:10px;color:#000;letter-spacing:0.05px">31</div>
<div style="left:1062.57px;top:301.00px;width:16.10px;height:12.00px;background:#502080;border:1px solid #39175c;"></div>
<div class="t" style="left:1062.57px;top:285.70px;height:11.5px;padding-top:1.5px;background:#fff;font-size:10px;color:#000;letter-spacing:0.05px">32</div>
<div style="left:1094.76px;top:301.00px;width:16.10px;height:12.00px;background:#70dd00;border:1px solid #509f00;"></div>
<div class="t" style="left:1094.76px;top:285.70px;height:11.5px;padding-top:1.5px;background:#fff;font-size:10px;color:#000;letter-spacing:0.05px">33</div>
<div style="left:1110.86px;top:301.00px;width:16.10px;height:12.00px;background:#b12828;border:1px solid #7f1c1c;"></div>
<div class="t" style="left:1110.86px;top:285.70px;height:11.5px;padding-top:1.5px;background:#fff;font-size:10px;color:#000;letter-spacing:0.05px">34</div>
<div style="left:1143.04px;top:301.00px;width:16.10px;height:12.00px;background:#845220;border:1px solid #5f3b17;"></div>
<div class="t" style="left:1143.04px;top:285.70px;height:11.5px;padding-top:1.5px;background:#fff;font-size:10px;color:#000;letter-spacing:0.05px">35</div>
<div style="left:1159.14px;top:301.00px;width:16.10px;height:12.00px;background:#28aa28;border:1px solid #1c7a1c;"></div>
<div class="t" style="left:1159.14px;top:285.70px;height:11.5px;padding-top:1.5px;background:#fff;font-size:10px;color:#000;letter-spacing:0.05px">36</div>
<div style="left:1191.33px;top:301.00px;width:16.10px;height:12.00px;background:#218050;border:1px solid #175c39;"></div>
<div class="t" style="left:1191.33px;top:285.70px;height:11.5px;padding-top:1.5px;background:#fff;font-size:10px;color:#000;letter-spacing:0.05px">37</div>
<div style="left:1207.42px;top:301.00px;width:16.10px;height:12.00px;background:#dd6f00;border:1px solid #9f4f00;"></div>
<div class="t" style="left:1207.42px;top:285.70px;height:11.5px;padding-top:1.5px;background:#fff;font-size:10px;color:#000;letter-spacing:0.05px">01</div>
<div style="left:1262.90px;top:332.50px;width:192.28px;height:10.00px;background:#e4e4e4;"></div>
<div style="left:386.58px;top:331.50px;width:16.09px;height:12.00px;background:#aab0dd;border:1px solid #7a7e9f;"></div>
<div class="t" style="left:386.58px;top:316.20px;height:11.5px;padding-top:1.5px;background:#fff;font-size:10px;color:#000;letter-spacing:0.05px">02</div>
<div style="left:402.67px;top:331.50px;width:16.10px;height:12.00px;background:#a6ac22;border:1px solid #777b18;"></div>
<div class="t" style="left:402.67px;top:316.20px;height:11.5px;padding-top:1.5px;background:#fff;font-size:10px;color:#000;letter-spacing:0.05px">03</div>
<div style="left:434.87px;top:331.50px;width:16.10px;height:12.00px;background:#ffc200;border:1px solid #b78b00;"></div>
<div class="t" style="left:434.87px;top:316.20px;height:11.5px;padding-top:1.5px;background:#fff;font-size:10px;color:#000;letter-spacing:0.05px">04</div>
<div style="left:450.96px;top:331.50px;width:16.09px;height:12.00px;background:#c87dfa;border:1px solid #905ab4;"></div>
<div class="t" style="left:450.96px;top:316.20px;height:11.5px;padding-top:1.5px;background:#fff;font-size:10px;color:#000;letter-spacing:0.05px">05</div>
<div style="left:483.15px;top:331.50px;width:16.10px;height:12.00px;background:#2088dd;border:1px solid #17619f;"></div>
<div class="t" style="left:483.15px;top:316.20px;height:11.5px;padding-top:1.5px;background:#fff;font-size:10px;color:#000;letter-spacing:0.05px">06</div>
<div style="left:499.25px;top:331.50px;width:16.09px;height:12.00px;background:#ff0000;border:1px solid #b70000;"></div>
<div class="t" style="left:499.25px;top:316.20px;height:11.5px;padding-top:1.5px;background:#fff;font-size:10px;color:#000;letter-spacing:0.05px">07</div>
<div style="left:531.43px;top:331.50px;width:16.10px;height:12.00px;background:#dd6f00;border:1px solid #9f4f00;"></div>
<div class="t" style="left:531.43px;top:316.20px;height:11.5px;padding-top:1.5px;background:#fff;font-size:10px;color:#000;letter-spacing:0.05px">11</div>
<div style="left:547.53px;top:331.50px;width:16.10px;height:12.00px;background:#6600dd;border:1px solid #49009f;"></div>
<div class="t" style="left:547.53px;top:316.20px;height:11.5px;padding-top:1.5px;background:#fff;font-size:10px;color:#000;letter-spacing:0.05px">12</div>
<div style="left:579.72px;top:331.50px;width:209.23px;height:12.00px;background:#202080;border:1px solid #17175c;"></div>
<div class="t" style="left:579.72px;top:316.20px;height:11.5px;padding-top:1.5px;background:#fff;font-size:10px;color:#000;letter-spacing:0.05px">13</div>
<div style="left:788.95px;top:331.50px;width:16.10px;height:12.00px;background:#dd0077;border:1px solid #9f0055;"></div>
<div class="t" style="left:788.95px;top:316.20px;height:11.5px;padding-top:1.5px;background:#fff;font-size:10px;color:#000;letter-spacing:0.05px">14</div>
<div style="left:821.14px;top:331.50px;width:16.10px;height:12.00px;background:#00dd66;border:1px solid #009f49;"></div>
<div class="t" style="left:821.14px;top:316.20px;height:11.5px;padding-top:1.5px;background:#fff;font-size:10px;color:#000;letter-spacing:0.05px">15</div>
<div style="left:837.24px;top:331.50px;width:16.10px;height:12.00px;background:#802020;border:1px solid #5c1717;"></div>
<div class="t" style="left:837.24px;top:316.20px;height:11.5px;padding-top:1.5px;background:#fff;font-size:10px;color:#000;letter-spacing:0.05px">16</div>
<div style="left:869.43px;top:331.50px;width:16.10px;height:12.00px;background:#0077dd;border:1px solid #00559f;"></div>
<div class="t" style="left:869.43px;top:316.20px;height:11.5px;padding-top:1.5px;background:#fff;font-size:10px;color:#000;letter-spacing:0.05px">17</div>
<div style="left:885.53px;top:331.50px;width:16.10px;height:12.00px;background:#808020;border:1px solid #5c5c17;"></div>
<div class="t" style="left:885.53px;top:316.20px;height:11.5px;padding-top:1.5px;background:#fff;font-size:10px;color:#000;letter-spacing:0.05px">21</div>
<div style="left:917.71px;top:331.50px;width:16.10px;height:12.00px;background:#205080;border:1px solid #17395c;"></div>
<div class="t" style="left:917.71px;top:316.20px;height:11.5px;padding-top:1.5px;background:#fff;font-size:10px;color:#000;letter-spacing:0.05px">22</div>
<div style="left:933.81px;top:331.50px;width:16.10px;height:12.00px;background:#238080;border:1px solid #195c5c;"></div>
<div class="t" style="left:933.81px;top:316.20px;height:11.5px;padding-top:1.5px;background:#fff;font-size:10px;color:#000;letter-spacing:0.05px">23</div>
<div style="left:966.00px;top:331.50px;width:16.10px;height:12.00px;background:#802050;border:1px solid #5c1739;"></div>
<div class="t" style="left:966.00px;top:316.20px;height:11.5px;padding-top:1.5px;background:#fff;font-size:10px;color:#000;letter-spacing:0.05px">24</div>
<div style="left:982.10px;top:331.50px;width:16.10px;height:12.00px;background:#7e2090;border:1px solid #5a1767;"></div>
<div class="t" style="left:982.10px;top:316.20px;height:11.5px;padding-top:1.5px;background:#fff;font-size:10px;color:#000;letter-spacing:0.05px">25</div>
<div style="left:1014.29px;top:331.50px;width:16.10px;height:12.00px;background:#b1ad30;border:1px solid #7f7c22;"></div>
<div class="t" style="left:1014.29px;top:316.20px;height:11.5px;padding-top:1.5px;background:#fff;font-size:10px;color:#000;letter-spacing:0.05px">26</div>
<div style="left:1030.38px;top:331.50px;width:16.10px;height:12.00px;background:#508020;border:1px solid #395c17;"></div>
<div class="t" style="left:1030.38px;top:316.20px;height:11.5px;padding-top:1.5px;background:#fff;font-size:10px;color:#000;letter-spacing:0.05px">27</div>
<div style="left:1062.57px;top:331.50px;width:16.10px;height:12.00px;background:#218021;border:1px solid #175c17;"></div>
<div class="t" style="left:1062.57px;top:316.20px;height:11.5px;padding-top:1.5px;background:#fff;font-size:10px;color:#000;letter-spacing:0.05px">31</div>
<div style="left:1078.66px;top:331.50px;width:16.10px;height:12.00px;background:#502080;border:1px solid #39175c;"></div>
<div class="t" style="left:1078.66px;top:316.20px;height:11.5px;padding-top:1.5px;background:#fff;font-size:10px;color:#000;letter-spacing:0.05px">32</div>
<div style="left:1110.85px;top:331.50px;width:16.10px;height:12.00px;background:#70dd00;border:1px solid #509f00;"></div>
<div class="t" style="left:1110.85px;top:316.20px;height:11.5px;padding-top:1.5px;background:#fff;font-size:10px;color:#000;letter-spacing:0.05px">33</div>
<div style="left:1126.95px;top:331.50px;width:16.10px;height:12.00px;background:#b12828;border:1px solid #7f1c1c;"></div>
<div class="t" style="left:1126.95px;top:316.20px;height:11.5px;padding-top:1.5px;background:#fff;font-size:10px;color:#000;letter-spacing:0.05px">34</div>
<div style="left:1159.14px;top:331.50px;width:16.10px;height:12.00px;background:#845220;border:1px solid #5f3b17;"></div>
<div class="t" style="left:1159.14px;top:316.20px;height:11.5px;padding-top:1.5px;background:#fff;font-size:10px;color:#000;letter-spacing:0.05px">35</div>
<div style="left:1175.23px;top:331.50px;width:16.10px;height:12.00px;background:#28aa28;border:1px solid #1c7a1c;"></div>
<div class="t" style="left:1175.23px;top:316.20px;height:11.5px;padding-top:1.5px;background:#fff;font-size:10px;color:#000;letter-spacing:0.05px">36</div>
<div style="left:1207.42px;top:331.50px;width:16.10px;height:12.00px;background:#218050;border:1px solid #175c39;"></div>
<div class="t" style="left:1207.42px;top:316.20px;height:11.5px;padding-top:1.5px;background:#fff;font-size:10px;color:#000;letter-spacing:0.05px">37</div>
<div style="left:1223.52px;top:331.50px;width:16.10px;height:12.00px;background:#dd6f00;border:1px solid #9f4f00;"></div>
<div class="t" style="left:1223.52px;top:316.20px;height:11.5px;padding-top:1.5px;background:#fff;font-size:10px;color:#000;letter-spacing:0.05px">01</div>
<div style="left:403.40px;top:361.70px;width:24.30px;height:12.00px;background:#aab0dd;border:1px solid #7a7e9f;"></div>
<div class="t" style="left:403.40px;top:346.40px;height:11.5px;padding-top:1.5px;background:#fff;font-size:10px;color:#000;letter-spacing:0.05px">02</div>
<div style="left:451.60px;top:361.70px;width:20.00px;height:12.00px;background:#ffc200;border:1px solid #b78b00;"></div>
<div class="t" style="left:451.60px;top:346.40px;height:11.5px;padding-top:1.5px;background:#fff;font-size:10px;color:#000;letter-spacing:0.05px">04</div>
<div style="left:471.60px;top:361.70px;width:80.10px;height:12.00px;background:#c87dfa;border:1px solid #905ab4;"></div>
<div class="t" style="left:471.60px;top:346.40px;height:11.5px;padding-top:1.5px;background:#fff;font-size:10px;color:#000;letter-spacing:0.05px">05</div>
<div style="left:551.70px;top:361.70px;width:233.40px;height:12.00px;background:#dd6f00;border:1px solid #9f4f00;"></div>
<div class="t" style="left:551.70px;top:346.40px;height:11.5px;padding-top:1.5px;background:#fff;font-size:10px;color:#000;letter-spacing:0.05px">11</div>
<div style="left:785.10px;top:361.70px;width:40.60px;height:12.00px;background:#6600dd;border:1px solid #49009f;"></div>
<div class="t" style="left:785.10px;top:346.40px;height:11.5px;padding-top:1.5px;background:#fff;font-size:10px;color:#000;letter-spacing:0.05px">12</div>
<div style="left:825.70px;top:361.70px;width:20.30px;height:12.00px;background:#dd0077;border:1px solid #9f0055;"></div>
<div class="t" style="left:825.70px;top:346.40px;height:11.5px;padding-top:1.5px;background:#fff;font-size:10px;color:#000;letter-spacing:0.05px">14</div>
<div style="left:846.00px;top:361.70px;width:80.80px;height:12.00px;background:#00dd66;border:1px solid #009f49;"></div>
<div class="t" style="left:846.00px;top:346.40px;height:11.5px;padding-top:1.5px;background:#fff;font-size:10px;color:#000;letter-spacing:0.05px">15</div>
<div style="left:926.80px;top:361.70px;width:18.80px;height:12.00px;background:#808020;border:1px solid #5c5c17;"></div>
<div class="t" style="left:926.80px;top:346.40px;height:11.5px;padding-top:1.5px;background:#fff;font-size:10px;color:#000;letter-spacing:0.05px">21</div>
<div style="left:945.60px;top:361.70px;width:81.00px;height:12.00px;background:#205080;border:1px solid #17395c;"></div>
<div class="t" style="left:945.60px;top:346.40px;height:11.5px;padding-top:1.5px;background:#fff;font-size:10px;color:#000;letter-spacing:0.05px">22</div>
<div style="left:1026.60px;top:361.70px;width:80.80px;height:12.00px;background:#802050;border:1px solid #5c1739;"></div>
<div class="t" style="left:1026.60px;top:346.40px;height:11.5px;padding-top:1.5px;background:#fff;font-size:10px;color:#000;letter-spacing:0.05px">24</div>
<div style="left:1107.40px;top:361.70px;width:79.70px;height:12.00px;background:#b1ad30;border:1px solid #7f7c22;"></div>
<div class="t" style="left:1107.40px;top:346.40px;height:11.5px;padding-top:1.5px;background:#fff;font-size:10px;color:#000;letter-spacing:0.05px">26</div>
<div style="left:1187.10px;top:361.70px;width:274.50px;height:12.00px;background:#218021;border:1px solid #175c17;"></div>
<div class="t" style="left:1187.10px;top:346.40px;height:11.5px;padding-top:1.5px;background:#fff;font-size:10px;color:#000;letter-spacing:0.05px">31</div>
<div style="left:1461.60px;top:361.70px;width:80.60px;height:12.00px;background:#70dd00;border:1px solid #509f00;"></div>
<div class="t" style="left:1461.60px;top:346.40px;height:11.5px;padding-top:1.5px;background:#fff;font-size:10px;color:#000;letter-spacing:0.05px">33</div>
<div style="left:1542.20px;top:361.70px;width:79.70px;height:12.00px;background:#845220;border:1px solid #5f3b17;"></div>
<div class="t" style="left:1542.20px;top:346.40px;height:11.5px;padding-top:1.5px;background:#fff;font-size:10px;color:#000;letter-spacing:0.05px">35</div>
<div style="left:1621.90px;top:361.70px;width:81.90px;height:12.00px;background:#218050;border:1px solid #175c39;"></div>
<div class="t" style="left:1621.90px;top:346.40px;height:11.5px;padding-top:1.5px;background:#fff;font-size:10px;color:#000;letter-spacing:0.05px">37</div>
<div style="left:419.10px;top:392.20px;width:80.80px;height:12.00px;background:#a6ac22;border:1px solid #777b18;"></div>
<div class="t" style="left:419.10px;top:376.90px;height:11.5px;padding-top:1.5px;background:#fff;font-size:10px;color:#000;letter-spacing:0.05px">03</div>
<div style="left:499.90px;top:392.20px;width:23.30px;height:12.00px;background:#2088dd;border:1px solid #17619f;"></div>
<div class="t" style="left:499.90px;top:376.90px;height:11.5px;padding-top:1.5px;background:#fff;font-size:10px;color:#000;letter-spacing:0.05px">06</div>
<div style="left:523.20px;top:392.20px;width:274.30px;height:12.00px;background:#ff0000;border:1px solid #b70000;"></div>
<div class="t" style="left:523.20px;top:376.90px;height:11.5px;padding-top:1.5px;background:#fff;font-size:10px;color:#000;letter-spacing:0.05px">07</div>
<div style="left:797.50px;top:392.20px;width:80.80px;height:12.00px;background:#202080;border:1px solid #17175c;"></div>
<div class="t" style="left:797.50px;top:376.90px;height:11.5px;padding-top:1.5px;background:#fff;font-size:10px;color:#000;letter-spacing:0.05px">13</div>
<div style="left:878.30px;top:392.20px;width:19.30px;height:12.00px;background:#802020;border:1px solid #5c1717;"></div>
<div class="t" style="left:878.30px;top:376.90px;height:11.5px;padding-top:1.5px;background:#fff;font-size:10px;color:#000;letter-spacing:0.05px">16</div>
<div style="left:897.60px;top:392.20px;width:80.80px;height:12.00px;background:#0077dd;border:1px solid #00559f;"></div>
<div class="t" style="left:897.60px;top:376.90px;height:11.5px;padding-top:1.5px;background:#fff;font-size:10px;color:#000;letter-spacing:0.05px">17</div>
<div style="left:978.40px;top:392.20px;width:80.80px;height:12.00px;background:#238080;border:1px solid #195c5c;"></div>
<div class="t" style="left:978.40px;top:376.90px;height:11.5px;padding-top:1.5px;background:#fff;font-size:10px;color:#000;letter-spacing:0.05px">23</div>
<div style="left:1059.20px;top:392.20px;width:79.60px;height:12.00px;background:#7e2090;border:1px solid #5a1767;"></div>
<div class="t" style="left:1059.20px;top:376.90px;height:11.5px;padding-top:1.5px;background:#fff;font-size:10px;color:#000;letter-spacing:0.05px">25</div>
<div style="left:1138.80px;top:392.20px;width:80.80px;height:12.00px;background:#508020;border:1px solid #395c17;"></div>
<div class="t" style="left:1138.80px;top:376.90px;height:11.5px;padding-top:1.5px;background:#fff;font-size:10px;color:#000;letter-spacing:0.05px">27</div>
<div style="left:1219.60px;top:392.20px;width:274.60px;height:12.00px;background:#502080;border:1px solid #39175c;"></div>
<div class="t" style="left:1219.60px;top:376.90px;height:11.5px;padding-top:1.5px;background:#fff;font-size:10px;color:#000;letter-spacing:0.05px">32</div>
<div style="left:1494.20px;top:392.20px;width:79.70px;height:12.00px;background:#b12828;border:1px solid #7f1c1c;"></div>
<div class="t" style="left:1494.20px;top:376.90px;height:11.5px;padding-top:1.5px;background:#fff;font-size:10px;color:#000;letter-spacing:0.05px">34</div>
<div style="left:1573.90px;top:392.20px;width:80.80px;height:12.00px;background:#28aa28;border:1px solid #1c7a1c;"></div>
<div class="t" style="left:1573.90px;top:376.90px;height:11.5px;padding-top:1.5px;background:#fff;font-size:10px;color:#000;letter-spacing:0.05px">36</div>
<div style="left:1654.70px;top:392.20px;width:40.90px;height:12.00px;background:#dd6f00;border:1px solid #9f4f00;"></div>
<div class="t" style="left:1654.70px;top:376.90px;height:11.5px;padding-top:1.5px;background:#fff;font-size:10px;color:#000;letter-spacing:0.05px">01</div>
<div style="left:586.00px;top:423.60px;width:192.70px;height:10.00px;background:#e4e4e4;"></div>
<div style="left:1262.90px;top:423.60px;width:192.28px;height:10.00px;background:#e4e4e4;"></div>
<div style="left:426.90px;top:422.60px;width:7.50px;height:12.00px;background:#aab0dd;border:1px solid #7a7e9f;"></div>
<div class="t" style="left:426.90px;top:407.30px;height:11.5px;padding-top:1.5px;background:#fff;font-size:10px;color:#000;letter-spacing:0.05px">02</div>
<div style="left:472.00px;top:422.60px;width:5.00px;height:12.00px;background:#ffc200;border:1px solid #b78b00;"></div>
<div class="t" style="left:472.00px;top:407.30px;height:11.5px;padding-top:1.5px;background:#fff;font-size:10px;color:#000;letter-spacing:0.05px">04</div>
<div style="left:500.00px;top:422.60px;width:20.70px;height:12.00px;background:#a6ac22;border:1px solid #777b18;"></div>
<div class="t" style="left:500.00px;top:407.30px;height:11.5px;padding-top:1.5px;background:#fff;font-size:10px;color:#000;letter-spacing:0.05px">03</div>
<div style="left:523.60px;top:422.60px;width:7.40px;height:12.00px;background:#2088dd;border:1px solid #17619f;"></div>
<div class="t" style="left:523.60px;top:407.30px;height:11.5px;padding-top:1.5px;background:#fff;font-size:10px;color:#000;letter-spacing:0.05px">06</div>
<div style="left:551.70px;top:422.60px;width:20.60px;height:12.00px;background:#c87dfa;border:1px solid #905ab4;"></div>
<div class="t" style="left:551.70px;top:407.30px;height:11.5px;padding-top:1.5px;background:#fff;font-size:10px;color:#000;letter-spacing:0.05px">05</div>
<div style="left:797.50px;top:422.60px;width:21.10px;height:12.00px;background:#ff0000;border:1px solid #b70000;"></div>
<div class="t" style="left:797.50px;top:407.30px;height:11.5px;padding-top:1.5px;background:#fff;font-size:10px;color:#000;letter-spacing:0.05px">07</div>
<div style="left:825.20px;top:422.60px;width:11.50px;height:12.00px;background:#6600dd;border:1px solid #49009f;"></div>
<div class="t" style="left:825.20px;top:407.30px;height:11.5px;padding-top:1.5px;background:#fff;font-size:10px;color:#000;letter-spacing:0.05px">12</div>
<div style="left:845.60px;top:422.60px;width:5.40px;height:12.00px;background:#dd0077;border:1px solid #9f0055;"></div>
<div class="t" style="left:845.60px;top:407.30px;height:11.5px;padding-top:1.5px;background:#fff;font-size:10px;color:#000;letter-spacing:0.05px">14</div>
<div style="left:878.30px;top:422.60px;width:19.70px;height:12.00px;background:#202080;border:1px solid #17175c;"></div>
<div class="t" style="left:878.30px;top:407.30px;height:11.5px;padding-top:1.5px;background:#fff;font-size:10px;color:#000;letter-spacing:0.05px">13</div>
<div style="left:898.00px;top:422.60px;width:6.20px;height:12.00px;background:#802020;border:1px solid #5c1717;"></div>
<div class="t" style="left:898.00px;top:407.30px;height:11.5px;padding-top:1.5px;background:#fff;font-size:10px;color:#000;letter-spacing:0.05px">16</div>
<div style="left:927.00px;top:422.60px;width:18.80px;height:12.00px;background:#00dd66;border:1px solid #009f49;"></div>
<div class="t" style="left:927.00px;top:407.30px;height:11.5px;padding-top:1.5px;background:#fff;font-size:10px;color:#000;letter-spacing:0.05px">15</div>
<div style="left:945.80px;top:422.60px;width:6.70px;height:12.00px;background:#808020;border:1px solid #5c5c17;"></div>
<div class="t" style="left:945.80px;top:407.30px;height:11.5px;padding-top:1.5px;background:#fff;font-size:10px;color:#000;letter-spacing:0.05px">21</div>
<div style="left:978.40px;top:422.60px;width:21.00px;height:12.00px;background:#0077dd;border:1px solid #00559f;"></div>
<div class="t" style="left:978.40px;top:407.30px;height:11.5px;padding-top:1.5px;background:#fff;font-size:10px;color:#000;letter-spacing:0.05px">17</div>
<div style="left:1026.60px;top:422.60px;width:21.10px;height:12.00px;background:#205080;border:1px solid #17395c;"></div>
<div class="t" style="left:1026.60px;top:407.30px;height:11.5px;padding-top:1.5px;background:#fff;font-size:10px;color:#000;letter-spacing:0.05px">22</div>
<div style="left:1059.20px;top:422.60px;width:21.00px;height:12.00px;background:#238080;border:1px solid #195c5c;"></div>
<div class="t" style="left:1059.20px;top:407.30px;height:11.5px;padding-top:1.5px;background:#fff;font-size:10px;color:#000;letter-spacing:0.05px">23</div>
<div style="left:1107.40px;top:422.60px;width:21.10px;height:12.00px;background:#802050;border:1px solid #5c1739;"></div>
<div class="t" style="left:1107.40px;top:407.30px;height:11.5px;padding-top:1.5px;background:#fff;font-size:10px;color:#000;letter-spacing:0.05px">24</div>
<div style="left:1138.80px;top:422.60px;width:21.00px;height:12.00px;background:#7e2090;border:1px solid #5a1767;"></div>
<div class="t" style="left:1138.80px;top:407.30px;height:11.5px;padding-top:1.5px;background:#fff;font-size:10px;color:#000;letter-spacing:0.05px">25</div>
<div style="left:1187.00px;top:422.60px;width:21.00px;height:12.00px;background:#b1ad30;border:1px solid #7f7c22;"></div>
<div class="t" style="left:1187.00px;top:407.30px;height:11.5px;padding-top:1.5px;background:#fff;font-size:10px;color:#000;letter-spacing:0.05px">26</div>
<div style="left:1220.00px;top:422.60px;width:20.70px;height:12.00px;background:#508020;border:1px solid #395c17;"></div>
<div class="t" style="left:1220.00px;top:407.30px;height:11.5px;padding-top:1.5px;background:#fff;font-size:10px;color:#000;letter-spacing:0.05px">27</div>
<div style="left:1461.40px;top:422.60px;width:21.00px;height:12.00px;background:#218021;border:1px solid #175c17;"></div>
<div class="t" style="left:1461.40px;top:407.30px;height:11.5px;padding-top:1.5px;background:#fff;font-size:10px;color:#000;letter-spacing:0.05px">31</div>
<div style="left:1494.20px;top:422.60px;width:21.00px;height:12.00px;background:#502080;border:1px solid #39175c;"></div>
<div class="t" style="left:1494.20px;top:407.30px;height:11.5px;padding-top:1.5px;background:#fff;font-size:10px;color:#000;letter-spacing:0.05px">32</div>
<div style="left:1542.20px;top:422.60px;width:21.00px;height:12.00px;background:#70dd00;border:1px solid #509f00;"></div>
<div class="t" style="left:1542.20px;top:407.30px;height:11.5px;padding-top:1.5px;background:#fff;font-size:10px;color:#000;letter-spacing:0.05px">33</div>
<div style="left:1573.90px;top:422.60px;width:21.00px;height:12.00px;background:#b12828;border:1px solid #7f1c1c;"></div>
<div class="t" style="left:1573.90px;top:407.30px;height:11.5px;padding-top:1.5px;background:#fff;font-size:10px;color:#000;letter-spacing:0.05px">34</div>
<div style="left:1621.90px;top:422.60px;width:21.00px;height:12.00px;background:#845220;border:1px solid #5f3b17;"></div>
<div class="t" style="left:1621.90px;top:407.30px;height:11.5px;padding-top:1.5px;background:#fff;font-size:10px;color:#000;letter-spacing:0.05px">35</div>
<div style="left:1654.20px;top:422.60px;width:21.50px;height:12.00px;background:#28aa28;border:1px solid #1c7a1c;"></div>
<div class="t" style="left:1654.20px;top:407.30px;height:11.5px;padding-top:1.5px;background:#fff;font-size:10px;color:#000;letter-spacing:0.05px">36</div>
<div style="left:1702.90px;top:422.60px;width:8.10px;height:12.00px;background:#218050;border:1px solid #175c39;border-right:none;"></div>
<div class="t" style="left:1702.90px;top:408.64px;width:8.10px;overflow:hidden;font-size:10px;color:#000">37</div>
<div style="left:173.00px;top:453.80px;width:25.86px;height:10.00px;background:#e4e4e4;"></div>
<div style="left:231.86px;top:453.80px;width:63.64px;height:10.00px;background:#e4e4e4;"></div>
<div style="left:328.50px;top:453.80px;width:63.64px;height:10.00px;background:#e4e4e4;"></div>
<div style="left:425.14px;top:453.80px;width:63.64px;height:10.00px;background:#e4e4e4;"></div>
<div style="left:521.78px;top:453.80px;width:256.92px;height:10.00px;background:#e4e4e4;"></div>
<div style="left:811.70px;top:453.80px;width:63.64px;height:10.00px;background:#e4e4e4;"></div>
<div style="left:908.34px;top:453.80px;width:63.64px;height:10.00px;background:#e4e4e4;"></div>
<div style="left:1004.98px;top:453.80px;width:63.64px;height:10.00px;background:#e4e4e4;"></div>
<div style="left:1101.62px;top:453.80px;width:63.64px;height:10.00px;background:#e4e4e4;"></div>
<div style="left:1198.26px;top:453.80px;width:256.92px;height:10.00px;background:#e4e4e4;"></div>
<div style="left:1488.18px;top:453.80px;width:63.64px;height:10.00px;background:#e4e4e4;"></div>
<div style="left:1584.82px;top:453.80px;width:63.64px;height:10.00px;background:#e4e4e4;"></div>
<div style="left:1681.46px;top:453.80px;width:29.54px;height:10.00px;background:#e4e4e4;"></div>
<div style="left:173.00px;top:484.00px;width:25.86px;height:10.00px;background:#e4e4e4;"></div>
<div style="left:231.86px;top:484.00px;width:63.64px;height:10.00px;background:#e4e4e4;"></div>
<div style="left:328.50px;top:484.00px;width:63.64px;height:10.00px;background:#e4e4e4;"></div>
<div style="left:425.14px;top:484.00px;width:63.64px;height:10.00px;background:#e4e4e4;"></div>
<div style="left:521.78px;top:484.00px;width:256.92px;height:10.00px;background:#e4e4e4;"></div>
<div style="left:811.70px;top:484.00px;width:63.64px;height:10.00px;background:#e4e4e4;"></div>
<div style="left:908.34px;top:484.00px;width:63.64px;height:10.00px;background:#e4e4e4;"></div>
<div style="left:1004.98px;top:484.00px;width:63.64px;height:10.00px;background:#e4e4e4;"></div>
<div style="left:1101.62px;top:484.00px;width:63.64px;height:10.00px;background:#e4e4e4;"></div>
<div style="left:1198.26px;top:484.00px;width:256.92px;height:10.00px;background:#e4e4e4;"></div>
<div style="left:1488.18px;top:484.00px;width:63.64px;height:10.00px;background:#e4e4e4;"></div>
<div style="left:1584.82px;top:484.00px;width:63.64px;height:10.00px;background:#e4e4e4;"></div>
<div style="left:1681.46px;top:484.00px;width:29.54px;height:10.00px;background:#e4e4e4;"></div>
<div style="left:785.10px;top:452.50px;width:16.70px;height:12.00px;background:#dd6f00;border:1px solid #9f4f00;"></div>
<div class="t" style="left:785.10px;top:437.20px;height:11.5px;padding-top:1.5px;background:#fff;font-size:10px;color:#000;letter-spacing:0.05px">11</div>
<div class="t" style="left:177.30px;top:577.17px;font-size:12.2px;color:#000;font-weight:normal;">Workload graph (% used)</div>
<div class="t" style="left:70.18px;top:674.92px;width:300px;text-align:center;font-size:12.5px;color:#000;font-weight:normal;">0%</div>
<div style="left:288.42px;top:681.00px;width:58.20px;height:6.00px;background:#ff0000;"></div>
<div style="left:288.42px;top:674.00px;width:58.20px;height:7.00px;background:#0000ff;"></div>
<div class="t" style="left:166.82px;top:661.42px;width:300px;text-align:center;font-size:12.5px;color:#000;font-weight:normal;">12%</div>
<div style="left:385.06px;top:673.00px;width:58.20px;height:14.00px;background:#ff0000;"></div>
<div style="left:385.06px;top:658.00px;width:58.20px;height:15.00px;background:#0000ff;"></div>
<div style="left:385.06px;top:649.00px;width:58.20px;height:9.00px;background:#00ffff;"></div>
<div style="left:385.06px;top:640.00px;width:58.20px;height:9.00px;background:#ffff00;"></div>
<div style="left:385.06px;top:629.00px;width:58.20px;height:11.00px;background:#00ff00;"></div>
<div style="left:385.06px;top:628.00px;width:58.20px;height:1.00px;background:#330000;"></div>
<div class="t" style="left:263.46px;top:615.22px;width:300px;text-align:center;font-size:12.5px;color:#000;font-weight:normal;">54%</div>
<div style="left:481.70px;top:673.00px;width:58.20px;height:14.00px;background:#ff0000;"></div>
<div style="left:481.70px;top:658.00px;width:58.20px;height:15.00px;background:#0000ff;"></div>
<div style="left:481.70px;top:649.00px;width:58.20px;height:9.00px;background:#00ffff;"></div>
<div style="left:481.70px;top:640.00px;width:58.20px;height:9.00px;background:#ffff00;"></div>
<div style="left:481.70px;top:612.00px;width:58.20px;height:28.00px;background:#00ff00;"></div>
<div style="left:481.70px;top:606.00px;width:58.20px;height:6.00px;background:#330000;"></div>
<div class="t" style="left:360.10px;top:593.62px;width:300px;text-align:center;font-size:12.5px;color:#000;font-weight:normal;">75%</div>
<div style="left:578.34px;top:683.00px;width:58.20px;height:4.00px;background:#ff0000;"></div>
<div style="left:578.34px;top:677.00px;width:58.20px;height:6.00px;background:#0000ff;"></div>
<div style="left:578.34px;top:675.00px;width:58.20px;height:2.00px;background:#00ffff;"></div>
<div style="left:578.34px;top:672.00px;width:58.20px;height:3.00px;background:#ffff00;"></div>
<div style="left:578.34px;top:665.00px;width:58.20px;height:7.00px;background:#00ff00;"></div>
<div style="left:578.34px;top:662.00px;width:58.20px;height:3.00px;background:#330000;"></div>
<div class="t" style="left:456.74px;top:649.92px;width:300px;text-align:center;font-size:12.5px;color:#000;font-weight:normal;">82%</div>
<div class="t" style="left:553.38px;top:674.92px;width:300px;text-align:center;font-size:12.5px;color:#000;font-weight:normal;">0%</div>
<div style="left:771.62px;top:677.00px;width:58.20px;height:10.00px;background:#ff0000;"></div>
<div style="left:771.62px;top:667.00px;width:58.20px;height:10.00px;background:#0000ff;"></div>
<div style="left:771.62px;top:660.00px;width:58.20px;height:7.00px;background:#00ffff;"></div>
<div style="left:771.62px;top:652.00px;width:58.20px;height:8.00px;background:#ffff00;"></div>
<div style="left:771.62px;top:632.00px;width:58.20px;height:20.00px;background:#00ff00;"></div>
<div style="left:771.62px;top:627.00px;width:58.20px;height:5.00px;background:#330000;"></div>
<div style="left:771.62px;top:625.00px;width:58.20px;height:2.00px;background:#ffc000;"></div>
<div class="t" style="left:650.02px;top:612.72px;width:300px;text-align:center;font-size:12.5px;color:#000;font-weight:normal;">77%</div>
<div style="left:868.26px;top:673.00px;width:58.20px;height:14.00px;background:#ff0000;"></div>
<div style="left:868.26px;top:658.00px;width:58.20px;height:15.00px;background:#0000ff;"></div>
<div style="left:868.26px;top:649.00px;width:58.20px;height:9.00px;background:#00ffff;"></div>
<div style="left:868.26px;top:640.00px;width:58.20px;height:9.00px;background:#ffff00;"></div>
<div style="left:868.26px;top:612.00px;width:58.20px;height:28.00px;background:#00ff00;"></div>
<div style="left:868.26px;top:605.00px;width:58.20px;height:7.00px;background:#330000;"></div>
<div class="t" style="left:746.66px;top:592.82px;width:300px;text-align:center;font-size:12.5px;color:#000;font-weight:normal;">76%</div>
<div style="left:964.90px;top:673.00px;width:58.20px;height:14.00px;background:#ff0000;"></div>
<div style="left:964.90px;top:658.00px;width:58.20px;height:15.00px;background:#0000ff;"></div>
<div style="left:964.90px;top:649.00px;width:58.20px;height:9.00px;background:#00ffff;"></div>
<div style="left:964.90px;top:640.00px;width:58.20px;height:9.00px;background:#ffff00;"></div>
<div style="left:964.90px;top:612.00px;width:58.20px;height:28.00px;background:#00ff00;"></div>
<div style="left:964.90px;top:607.00px;width:58.20px;height:5.00px;background:#330000;"></div>
<div class="t" style="left:843.30px;top:594.02px;width:300px;text-align:center;font-size:12.5px;color:#000;font-weight:normal;">75%</div>
<div style="left:1061.54px;top:673.00px;width:58.20px;height:14.00px;background:#ff0000;"></div>
<div style="left:1061.54px;top:658.00px;width:58.20px;height:15.00px;background:#0000ff;"></div>
<div style="left:1061.54px;top:649.00px;width:58.20px;height:9.00px;background:#00ffff;"></div>
<div style="left:1061.54px;top:640.00px;width:58.20px;height:9.00px;background:#ffff00;"></div>
<div style="left:1061.54px;top:612.00px;width:58.20px;height:28.00px;background:#00ff00;"></div>
<div style="left:1061.54px;top:605.00px;width:58.20px;height:7.00px;background:#330000;"></div>
<div class="t" style="left:939.94px;top:592.82px;width:300px;text-align:center;font-size:12.5px;color:#000;font-weight:normal;">76%</div>
<div style="left:1158.18px;top:680.00px;width:58.20px;height:7.00px;background:#ff0000;"></div>
<div style="left:1158.18px;top:672.00px;width:58.20px;height:8.00px;background:#0000ff;"></div>
<div style="left:1158.18px;top:663.00px;width:58.20px;height:9.00px;background:#00ffff;"></div>
<div style="left:1158.18px;top:654.00px;width:58.20px;height:9.00px;background:#ffff00;"></div>
<div style="left:1158.18px;top:626.00px;width:58.20px;height:28.00px;background:#00ff00;"></div>
<div style="left:1158.18px;top:618.00px;width:58.20px;height:8.00px;background:#330000;"></div>
<div class="t" style="left:1036.58px;top:604.92px;width:300px;text-align:center;font-size:12.5px;color:#000;font-weight:normal;">65%</div>
<div style="left:1254.82px;top:686.00px;width:58.20px;height:1.00px;background:#ffff00;"></div>
<div style="left:1254.82px;top:678.00px;width:58.20px;height:8.00px;background:#00ff00;"></div>
<div style="left:1254.82px;top:677.00px;width:58.20px;height:1.00px;background:#330000;"></div>
<div class="t" style="left:1133.22px;top:664.32px;width:300px;text-align:center;font-size:12.5px;color:#000;font-weight:normal;">34%</div>
<div class="t" style="left:1229.86px;top:674.92px;width:300px;text-align:center;font-size:12.5px;color:#000;font-weight:normal;">0%</div>
<div style="left:1448.10px;top:667.00px;width:58.20px;height:20.00px;background:#00ff00;"></div>
<div style="left:1448.10px;top:661.00px;width:58.20px;height:6.00px;background:#330000;"></div>
<div class="t" style="left:1326.50px;top:648.72px;width:300px;text-align:center;font-size:12.5px;color:#000;font-weight:normal;">33%</div>
<div style="left:1544.74px;top:659.00px;width:58.20px;height:28.00px;background:#00ff00;"></div>
<div style="left:1544.74px;top:654.00px;width:58.20px;height:5.00px;background:#330000;"></div>
<div class="t" style="left:1423.14px;top:640.92px;width:300px;text-align:center;font-size:12.5px;color:#000;font-weight:normal;">32%</div>
<div style="left:1641.38px;top:664.00px;width:58.20px;height:23.00px;background:#00ff00;"></div>
<div style="left:1641.38px;top:656.00px;width:58.20px;height:8.00px;background:#330000;"></div>
<div class="t" style="left:1519.78px;top:643.22px;width:300px;text-align:center;font-size:12.5px;color:#000;font-weight:normal;">28%</div>
<div style="left:173.00px;top:687.00px;width:1538.00px;height:1.00px;background:#333333;"></div>
<div class="t" style="left:177.30px;top:689.33px;font-size:12.6px;color:#000;font-weight:normal;">Raw plates (1), Inventory [kg]</div>
<div style="left:191.78px;top:717.00px;width:58.20px;height:46.00px;background:#00ff00;"></div>
<div class="t" style="left:70.18px;top:704.64px;width:300px;text-align:center;font-size:12px;color:#000;font-weight:normal;">1,500</div>
<div style="left:288.42px;top:721.00px;width:58.20px;height:42.00px;background:#00ff00;"></div>
<div class="t" style="left:166.82px;top:708.65px;width:300px;text-align:center;font-size:12px;color:#000;font-weight:normal;">1,370</div>
<div style="left:385.06px;top:729.00px;width:58.20px;height:34.00px;background:#00ff00;"></div>
<div class="t" style="left:263.46px;top:716.50px;width:300px;text-align:center;font-size:12px;color:#000;font-weight:normal;">1,115</div>
<div style="left:481.70px;top:736.00px;width:58.20px;height:27.00px;background:#00ff00;"></div>
<div class="t" style="left:360.10px;top:723.43px;width:300px;text-align:center;font-size:12px;color:#000;font-weight:normal;">890</div>
<div style="left:578.34px;top:739.00px;width:58.20px;height:24.00px;background:#00ff00;"></div>
<div class="t" style="left:456.74px;top:727.28px;width:300px;text-align:center;font-size:12px;color:#000;font-weight:normal;">765</div>
<div style="left:674.98px;top:739.00px;width:58.20px;height:24.00px;background:#00ff00;"></div>
<div class="t" style="left:553.38px;top:727.28px;width:300px;text-align:center;font-size:12px;color:#000;font-weight:normal;">765</div>
<div style="left:771.62px;top:743.00px;width:58.20px;height:20.00px;background:#00ff00;"></div>
<div class="t" style="left:650.02px;top:731.13px;width:300px;text-align:center;font-size:12px;color:#000;font-weight:normal;">640</div>
<div style="left:868.26px;top:756.00px;width:58.20px;height:7.00px;background:#00ff00;"></div>
<div class="t" style="left:746.66px;top:743.45px;width:300px;text-align:center;font-size:12px;color:#000;font-weight:normal;">240</div>
<div style="left:964.90px;top:764.00px;width:58.20px;height:4.00px;background:#00ff00;"></div>
<div class="t" style="left:843.30px;top:767.76px;width:300px;text-align:center;font-size:12px;color:#ff0000;font-weight:normal;">-160</div>
<div style="left:1061.54px;top:764.00px;width:58.20px;height:15.00px;background:#00ff00;"></div>
<div class="t" style="left:939.94px;top:778.80px;width:300px;text-align:center;font-size:12px;color:#ff0000;font-weight:normal;">-560</div>
<div style="left:1158.18px;top:764.00px;width:58.20px;height:20.00px;background:#00ff00;"></div>
<div class="t" style="left:1036.58px;top:782.94px;width:300px;text-align:center;font-size:12px;color:#ff0000;font-weight:normal;">-710</div>
<div style="left:1254.82px;top:764.00px;width:58.20px;height:20.00px;background:#00ff00;"></div>
<div class="t" style="left:1133.22px;top:782.94px;width:300px;text-align:center;font-size:12px;color:#ff0000;font-weight:normal;">-710</div>
<div style="left:1351.46px;top:764.00px;width:58.20px;height:20.00px;background:#00ff00;"></div>
<div class="t" style="left:1229.86px;top:782.94px;width:300px;text-align:center;font-size:12px;color:#ff0000;font-weight:normal;">-710</div>
<div style="left:1448.10px;top:764.00px;width:58.20px;height:20.00px;background:#00ff00;"></div>
<div class="t" style="left:1326.50px;top:782.94px;width:300px;text-align:center;font-size:12px;color:#ff0000;font-weight:normal;">-710</div>
<div style="left:1544.74px;top:764.00px;width:58.20px;height:20.00px;background:#00ff00;"></div>
<div class="t" style="left:1423.14px;top:782.94px;width:300px;text-align:center;font-size:12px;color:#ff0000;font-weight:normal;">-710</div>
<div style="left:1641.38px;top:764.00px;width:58.20px;height:20.00px;background:#00ff00;"></div>
<div class="t" style="left:1519.78px;top:782.94px;width:300px;text-align:center;font-size:12px;color:#ff0000;font-weight:normal;">-710</div>
<div style="left:173.00px;top:763.00px;width:1538.00px;height:1.00px;background:#333333;"></div>
<div style="left:173.00px;top:800.00px;width:1538.00px;height:1.00px;background:#333333;"></div>
<div class="t" style="left:177.30px;top:801.33px;font-size:12.6px;color:#000;font-weight:normal;">Finished product (3), Inventory [kg]</div>
<div style="left:385.06px;top:910.00px;width:58.20px;height:1.00px;background:#a9b03a;"></div>
<div class="t" style="left:263.46px;top:897.68px;width:300px;text-align:center;font-size:12px;color:#000;font-weight:normal;">30</div>
<div style="left:481.70px;top:903.00px;width:58.20px;height:8.00px;background:#a9b03a;"></div>
<div class="t" style="left:360.10px;top:890.42px;width:300px;text-align:center;font-size:12px;color:#000;font-weight:normal;">217</div>
<div style="left:578.34px;top:900.00px;width:58.20px;height:11.00px;background:#a9b03a;"></div>
<div class="t" style="left:456.74px;top:887.78px;width:300px;text-align:center;font-size:12px;color:#000;font-weight:normal;">285</div>
<div style="left:674.98px;top:900.00px;width:58.20px;height:11.00px;background:#a9b03a;"></div>
<div class="t" style="left:553.38px;top:887.78px;width:300px;text-align:center;font-size:12px;color:#000;font-weight:normal;">285</div>
<div style="left:771.62px;top:892.00px;width:58.20px;height:19.00px;background:#a9b03a;"></div>
<div class="t" style="left:650.02px;top:879.56px;width:300px;text-align:center;font-size:12px;color:#000;font-weight:normal;">497</div>
<div style="left:868.26px;top:883.00px;width:58.20px;height:28.00px;background:#a9b03a;"></div>
<div class="t" style="left:746.66px;top:870.63px;width:300px;text-align:center;font-size:12px;color:#000;font-weight:normal;">727</div>
<div style="left:964.90px;top:875.00px;width:58.20px;height:36.00px;background:#a9b03a;"></div>
<div class="t" style="left:843.30px;top:862.68px;width:300px;text-align:center;font-size:12px;color:#000;font-weight:normal;">932</div>
<div style="left:1061.54px;top:866.00px;width:58.20px;height:45.00px;background:#a9b03a;"></div>
<div class="t" style="left:939.94px;top:853.83px;width:300px;text-align:center;font-size:12px;color:#000;font-weight:normal;">1,160</div>
<div style="left:1158.18px;top:855.00px;width:58.20px;height:56.00px;background:#a9b03a;"></div>
<div class="t" style="left:1036.58px;top:843.28px;width:300px;text-align:center;font-size:12px;color:#000;font-weight:normal;">1,432</div>
<div style="left:1254.82px;top:854.00px;width:58.20px;height:57.00px;background:#a9b03a;"></div>
<div class="t" style="left:1133.22px;top:842.19px;width:300px;text-align:center;font-size:12px;color:#000;font-weight:normal;">1,460</div>
<div style="left:1351.46px;top:854.00px;width:58.20px;height:57.00px;background:#a9b03a;"></div>
<div class="t" style="left:1229.86px;top:842.19px;width:300px;text-align:center;font-size:12px;color:#000;font-weight:normal;">1,460</div>
<div style="left:1448.10px;top:847.00px;width:58.20px;height:64.00px;background:#a9b03a;"></div>
<div class="t" style="left:1326.50px;top:834.43px;width:300px;text-align:center;font-size:12px;color:#000;font-weight:normal;">1,660</div>
<div style="left:1544.74px;top:839.00px;width:58.20px;height:72.00px;background:#a9b03a;"></div>
<div class="t" style="left:1423.14px;top:826.67px;width:300px;text-align:center;font-size:12px;color:#000;font-weight:normal;">1,860</div>
<div style="left:1641.38px;top:828.00px;width:58.20px;height:83.00px;background:#a9b03a;"></div>
<div class="t" style="left:1519.78px;top:816.12px;width:300px;text-align:center;font-size:12px;color:#000;font-weight:normal;">2,132</div>
<div style="left:173.00px;top:911.00px;width:1538.00px;height:34.00px;background:#646464;"></div>
<div style="left:173.00px;top:911.00px;width:1538.00px;height:1.00px;background:#2a2a2a;"></div>
<div class="t" style="left:70.18px;top:917.54px;width:300px;text-align:center;font-size:12px;color:#eeeeee;font-weight:normal;">Tue 28</div>
<div class="t" style="left:166.82px;top:917.54px;width:300px;text-align:center;font-size:12px;color:#eeeeee;font-weight:normal;">Wed 29</div>
<div class="t" style="left:263.46px;top:917.54px;width:300px;text-align:center;font-size:12px;color:#eeeeee;font-weight:normal;">Thu 30</div>
<div class="t" style="left:360.10px;top:917.54px;width:300px;text-align:center;font-size:12px;color:#eeeeee;font-weight:normal;">Fri 31</div>
<div class="t" style="left:456.74px;top:917.54px;width:300px;text-align:center;font-size:12px;color:#eeeeee;font-weight:normal;">Sat 01</div>
<div class="t" style="left:553.38px;top:917.54px;width:300px;text-align:center;font-size:12px;color:#eeeeee;font-weight:normal;">Sun 02</div>
<div class="t" style="left:650.02px;top:917.54px;width:300px;text-align:center;font-size:12px;color:#eeeeee;font-weight:normal;">Mon 03</div>
<div class="t" style="left:746.66px;top:917.54px;width:300px;text-align:center;font-size:12px;color:#eeeeee;font-weight:normal;">Tue 04</div>
<div class="t" style="left:843.30px;top:917.54px;width:300px;text-align:center;font-size:12px;color:#eeeeee;font-weight:normal;">Wed 05</div>
<div class="t" style="left:939.94px;top:917.54px;width:300px;text-align:center;font-size:12px;color:#eeeeee;font-weight:normal;">Thu 06</div>
<div class="t" style="left:1036.58px;top:917.54px;width:300px;text-align:center;font-size:12px;color:#eeeeee;font-weight:normal;">Fri 07</div>
<div class="t" style="left:1133.22px;top:917.54px;width:300px;text-align:center;font-size:12px;color:#eeeeee;font-weight:normal;">Sat 08</div>
<div class="t" style="left:1229.86px;top:917.54px;width:300px;text-align:center;font-size:12px;color:#eeeeee;font-weight:normal;">Sun 09</div>
<div class="t" style="left:1326.50px;top:917.54px;width:300px;text-align:center;font-size:12px;color:#eeeeee;font-weight:normal;">Mon 10</div>
<div class="t" style="left:1423.14px;top:917.54px;width:300px;text-align:center;font-size:12px;color:#eeeeee;font-weight:normal;">Tue 11</div>
<div class="t" style="left:1519.78px;top:917.54px;width:300px;text-align:center;font-size:12px;color:#eeeeee;font-weight:normal;">Wed 12</div>
<div class="t" style="left:173.90px;top:931.47px;font-size:13.5px;color:#f4f4f4;font-weight:bold;">Aug - Week 35 - 2018</div>
<div class="t" style="left:753.60px;top:931.47px;font-size:13.5px;color:#f4f4f4;font-weight:bold;">Sep - Week 36 - 2018</div>
<div class="t" style="left:1430.00px;top:931.47px;font-size:13.5px;color:#f4f4f4;font-weight:bold;">Sep - Week 37 - 2018</div>
<div style="left:2.00px;top:911.00px;width:164.00px;height:1.00px;background:#b4b4b4;"></div>
<div style="left:2.00px;top:912.00px;width:164.00px;height:1.00px;background:#ececec;"></div>
<div class="t" style="left:7.30px;top:921.62px;font-size:12.5px;color:#000;font-weight:normal;">View</div>
<div style="left:8.00px;top:944.00px;width:152.00px;height:17.50px;background:#fbfbfb;border:1px solid #adadad;"></div>
<div class="t" style="left:10.00px;top:946.92px;font-size:12.5px;color:#000;font-weight:normal;">Standard</div>
<svg style="position:absolute;left:146.5px;top:950px;" width="7" height="4" viewBox="0 0 7 4"><polygon points="0,0 7,0 3.5,4" fill="#000"/></svg>
<div style="left:173.00px;top:945.00px;width:1538.00px;height:24.00px;background:#f0f0f0;"></div>
<div style="left:172.60px;top:947.70px;width:111.00px;height:19.00px;background:#fbfbfb;border:1px solid #adadad;"></div>
<div class="t" style="left:175.00px;top:950.92px;font-size:12.5px;color:#000;font-weight:normal;">Standard</div>
<svg style="position:absolute;left:269px;top:954.5px;" width="9" height="5" viewBox="0 0 9 5"><polygon points="0,0 9,0 4.5,5" fill="#000"/></svg>
<div style="left:287.20px;top:947.00px;width:80.00px;height:18.00px;background:#e8e8e8;border:1px solid #d0d0d0;"></div>
<div class="t" style="left:292.00px;top:950.14px;font-size:12px;color:#000;font-weight:normal;">Material view</div>
<div style="left:367.90px;top:946.20px;width:102.60px;height:21.30px;background:#ffffff;border:1px solid #d8d8d8;"></div>
<div class="t" style="left:373.50px;top:952.14px;font-size:12px;color:#000;font-weight:normal;">My material view</div>
<div style="left:1711.00px;top:193.00px;width:1.00px;height:776.00px;background:#ffffff;"></div>
<div style="left:1712.00px;top:193.00px;width:16.00px;height:776.00px;background:#efefef;"></div>
<div style="left:1712.00px;top:193.00px;width:16.00px;height:2.00px;background:#ffffff;"></div>
<svg style="position:absolute;left:1716px;top:199px;" width="9" height="9" viewBox="0 0 9 9"><path d="M1,7 L4.5,3 L8,7" stroke="#555" stroke-width="2" fill="none"/></svg>
<svg style="position:absolute;left:1716px;top:562px;" width="9" height="9" viewBox="0 0 9 9"><path d="M1,2 L4.5,6 L8,2" stroke="#555" stroke-width="2" fill="none"/></svg>
<svg style="position:absolute;left:1716px;top:581px;" width="9" height="9" viewBox="0 0 9 9"><path d="M1,7 L4.5,3 L8,7" stroke="#555" stroke-width="2" fill="none"/></svg>
<div style="left:1712.00px;top:594.00px;width:16.00px;height:267.00px;background:#cdcdcd;"></div>
<svg style="position:absolute;left:1716px;top:956px;" width="9" height="9" viewBox="0 0 9 9"><path d="M1,2 L4.5,6 L8,2" stroke="#555" stroke-width="2" fill="none"/></svg>
<div style="left:2.00px;top:969.00px;width:1728.00px;height:23.00px;background:#f8f8f8;"></div>
<div style="left:2.00px;top:969.00px;width:1728.00px;height:1.00px;background:#cfcfcf;"></div>
<div style="left:119.00px;top:970.00px;width:1.00px;height:21.00px;background:#d2d2d2;"></div>
<div style="left:1098.00px;top:970.00px;width:1.00px;height:21.00px;background:#d2d2d2;"></div>
<div style="left:1291.00px;top:970.00px;width:1.00px;height:21.00px;background:#d2d2d2;"></div>
<div style="left:1396.00px;top:970.00px;width:1.00px;height:21.00px;background:#d2d2d2;"></div>
<div style="left:1532.00px;top:970.00px;width:1.00px;height:21.00px;background:#d2d2d2;"></div>
<div style="left:1557.00px;top:970.00px;width:1.00px;height:21.00px;background:#d2d2d2;"></div>
<div class="t" style="left:6.00px;top:974.74px;font-size:12px;color:#000;font-weight:normal;">ROB-EX v6.4.0.317</div>
<div class="t" style="left:1100.70px;top:974.74px;font-size:12px;color:#000;font-weight:normal;">2 weeks</div>
<div style="left:1156.00px;top:979.00px;width:11.00px;height:2.00px;background:#333;"></div>
<div style="left:1174.00px;top:978.50px;width:97.50px;height:3.30px;background:#dcdcdc;"></div>
<div style="left:1208.30px;top:973.00px;width:6.40px;height:15.00px;background:#0078d7;"></div>
<div style="left:1277.00px;top:979.00px;width:12.00px;height:2.00px;background:#333;"></div>
<div style="left:1282.00px;top:974.00px;width:2.00px;height:12.00px;background:#333;"></div>
<div class="t" style="left:1294.20px;top:974.74px;font-size:12px;color:#000;font-weight:normal;">Shopfloor stopped</div>
<div class="t" style="left:1399.00px;top:974.74px;font-size:12px;color:#000;font-weight:normal;">Multiuser Server off-line</div>
<div style="left:1539.00px;top:974.00px;width:13.40px;height:13.00px;background:#ffff00;border:1px solid #e0e000;"></div>
<div class="t" style="left:1561.00px;top:974.74px;font-size:12px;color:#000;font-weight:normal;">Wednesday 29-08-2018 13:37</div>
<div style="left:541.20px;top:59.40px;width:36.00px;height:34.30px;background:#777777;"></div>
<div style="left:731.20px;top:59.50px;width:72.00px;height:34.10px;background:#787878;"></div>
<svg style="position:absolute;left:0;top:0" width="1732" height="100" viewBox="0 0 1732 100"><polygon points="13,67 20.5,67 27,73 27,85.4 13,85.4" fill="#d6d6d6"/><polygon points="21.2,67.6 26.4,72.6 21.2,72.6" fill="#d6d6d6"/><path d="M20.6,67 L20.6,73.2 L27,73.2" stroke="#535353" stroke-width="1" fill="none"/><polygon points="45.8,72 52.5,72 53.5,69.5 59.4,69.5 60.4,72 62.8,72 62.8,75 49.3,75 46.5,82 45.8,82" fill="#d6d6d6"/><polygon points="49.8,75.6 66,75.6 62.6,82.8 47.3,82.8" fill="#d6d6d6"/><rect x="84" y="68.1" width="16.1" height="16.1" fill="#d6d6d6"/><rect x="87.7" y="71.3" width="8.3" height="2.6" fill="#535353"/><rect x="87.7" y="79.9" width="8.3" height="4.4" fill="#535353"/><rect x="89.7" y="81.9" width="4.9" height="2.4" fill="#d6d6d6"/><rect x="122.2" y="67" width="11.4" height="3.5" fill="#d6d6d6"/><rect x="118.7" y="71.7" width="18.2" height="8.9" fill="#d6d6d6"/><rect x="122.5" y="76.6" width="10.8" height="1.6" fill="#535353"/><polygon points="148.8,73.8 157.4,73.8 153.10000000000002,78.9" fill="#eeeeee"/><polygon points="207.2,73.8 215.79999999999998,73.8 211.5,78.9" fill="#eeeeee"/><polygon points="339.8,73.8 348.40000000000003,73.8 344.1,78.9" fill="#eeeeee"/><polygon points="580,73.8 588.6,73.8 584.3,78.9" fill="#eeeeee"/><polygon points="638.7,73.8 647.3000000000001,73.8 643.0,78.9" fill="#eeeeee"/><polygon points="842,73.8 850.6,73.8 846.3,78.9" fill="#eeeeee"/><polygon points="1045.6,73.8 1054.1999999999998,73.8 1049.8999999999999,78.9" fill="#eeeeee"/><path d="M240.5,76 A6,6 0 0 1 251.5,79 Q251.8,81 250.7,83" stroke="#a2a2a2" stroke-width="2.2" fill="none"/><polygon points="237.6,69.7 237.6,78 245.5,78" fill="#a2a2a2"/><path d="M286.5,76 A6,6 0 0 0 275.5,79 Q275.2,81 276.3,83" stroke="#a2a2a2" stroke-width="2.2" fill="none"/><polygon points="289.8,69.7 289.8,78 281.9,78" fill="#a2a2a2"/><rect x="307.3" y="69.4" width="1.8" height="11.4" fill="#d6d6d6"/><rect x="328.3" y="69.4" width="1.8" height="11.4" fill="#d6d6d6"/><rect x="312" y="74.2" width="13" height="1.6" fill="#d6d6d6"/><polygon points="309.5,75 315.8,71 315.8,79" fill="#d6d6d6"/><polygon points="328,75 321.7,71 321.7,79" fill="#d6d6d6"/><polygon points="369.5,76.0 375.4,69.2 380.29999999999995,69.2 374.4,76.0 380.29999999999995,82.8 375.4,82.8" fill="#d6d6d6"/><polygon points="376.2,76.0 382.0,69.2 387.2,69.2 381.4,76.0 387.2,82.8 382.0,82.8" fill="#d6d6d6"/><polygon points="408.7,76.0 414.9,69.2 419.79999999999995,69.2 413.59999999999997,76.0 419.79999999999995,82.8 414.9,82.8" fill="#d6d6d6"/><polygon points="448.3,76.0 442.5,69.2 438.2,69.2 444.0,76.0 438.2,82.8 442.5,82.8" fill="#d6d6d6"/><rect x="449.3" y="69.3" width="2.4" height="13.6" fill="#d6d6d6"/><polygon points="452.3,76.0 458.1,69.2 462.5,69.2 456.7,76.0 462.5,82.8 458.1,82.8" fill="#d6d6d6"/><polygon points="492,76.0 485.8,69.2 480.90000000000003,69.2 487.1,76.0 480.90000000000003,82.8 485.8,82.8" fill="#d6d6d6"/><polygon points="524.6,76.0 518.8000000000001,69.2 513.6,69.2 519.4,76.0 513.6,82.8 518.8000000000001,82.8" fill="#d6d6d6"/><polygon points="531.3,76.0 525.4,69.2 520.5,69.2 526.4,76.0 520.5,82.8 525.4,82.8" fill="#d6d6d6"/><path d="M565.3,67.9 L559.6,74.2" stroke="#d6d6d6" stroke-width="2.4" stroke-linecap="round"/><path d="M555.6,74.6 L559.4,78.2" stroke="#d6d6d6" stroke-width="1.3"/><rect x="549.3" y="76.3" width="7.6" height="8.4" rx="1.3" transform="rotate(45 553.1 80.5)" fill="#d6d6d6"/><polygon points="604,67 621,67 614.6,76.5 614.6,80.5 611.2,84.3 611.2,76.5" fill="#d6d6d6"/><polygon points="664.5,76.2 677.5,76.2 672.6,82.5 672.6,85.5 670.2,88.7 670.2,82.5" fill="#a2a2a2"/><path d="M674.5,70.5 L686.3,80.6" stroke="#a2a2a2" stroke-width="3.6" stroke-linecap="round"/><circle cx="673.4" cy="68.6" r="3.7" fill="#a2a2a2"/><path d="M674.2,69.4 L669.8,65" stroke="#535353" stroke-width="2.3"/><circle cx="686.2" cy="80.5" r="2.4" fill="#a2a2a2"/><circle cx="686.2" cy="80.5" r="0.9" fill="#535353"/><rect x="703.9" y="66.7" width="18.6" height="19" fill="none" stroke="#d6d6d6" stroke-width="2"/><polygon points="718.3,80 719.7,81.4 718.3,82.8 716.9,81.4" fill="#d6d6d6"/><rect x="737.7" y="67.3" width="9.3" height="5.7" fill="#d6d6d6"/><rect x="751.4" y="79.4" width="9.3" height="5.7" fill="#d6d6d6"/><path d="M746,72 L752.5,80" stroke="#d6d6d6" stroke-width="1.8"/><rect x="779.3" y="66.1" width="11.8" height="5.2" fill="#d6d6d6"/><rect x="779.3" y="81" width="11.8" height="5.3" fill="#d6d6d6"/><rect x="779.5" y="73.2" width="2.2" height="2.2" fill="#d6d6d6"/><rect x="779.5" y="77.5" width="2.2" height="2.2" fill="#d6d6d6"/><rect x="789.4" y="73.2" width="2.2" height="2.2" fill="#d6d6d6"/><rect x="789.4" y="77.5" width="2.2" height="2.2" fill="#d6d6d6"/><rect x="812.9" y="67.3" width="17.4" height="5.7" rx="1" fill="#d6d6d6"/><rect x="822" y="69.2" width="6.5" height="2" fill="#535353"/><path d="M811.9,76.6 L811.9,80.8 L824.8,80.8 L824.8,76.6" stroke="#d6d6d6" stroke-width="2" fill="none"/><rect x="869.1" y="68.3" width="5.9" height="5.7" fill="#d6d6d6"/><rect x="884.6" y="69" width="4.6" height="4.3" fill="none" stroke="#d6d6d6" stroke-width="1.5"/><path d="M879,71.2 L884,71.2" stroke="#d6d6d6" stroke-width="1.2"/><polygon points="876.5,71.2 879.5,69.4 879.5,73" fill="#d6d6d6"/><rect x="869.8" y="79.1" width="4.6" height="4.3" fill="none" stroke="#d6d6d6" stroke-width="1.5"/><rect x="883.9" y="78.4" width="5.9" height="5.7" fill="#d6d6d6"/><path d="M875,81.3 L880,81.3" stroke="#d6d6d6" stroke-width="1.2"/><polygon points="882.5,81.3 879.5,79.5 879.5,83.1" fill="#d6d6d6"/><rect x="905.7" y="69" width="4.6" height="4.3" fill="none" stroke="#d6d6d6" stroke-width="1.5"/><rect x="914.7" y="69" width="8" height="4.2" fill="none" stroke="#d6d6d6" stroke-width="1.5"/><path d="M923.3,71.2 L926,71.2" stroke="#d6d6d6" stroke-width="1.2"/><polygon points="928.7,71.2 925.7,69.4 925.7,73" fill="#d6d6d6"/><rect x="911.8" y="78.7" width="5.2" height="5.1" fill="#d6d6d6"/><path d="M912.8,77.5 L912.8,79" stroke="#d6d6d6" stroke-width="1.2"/><polygon points="912.8,74.8 911,77.6 914.6,77.6" fill="#d6d6d6"/><circle cx="948.5" cy="73.5" r="6.3" fill="none" stroke="#d6d6d6" stroke-width="2.4"/><path d="M945.2,73.5 L951.8,73.5 M948.5,70.2 L948.5,76.8" stroke="#d6d6d6" stroke-width="1.2"/><path d="M953.5,78.5 L961,86" stroke="#d6d6d6" stroke-width="3" stroke-linecap="round"/><rect x="979.1" y="70.3" width="2.6" height="2.6" fill="#d6d6d6"/><rect x="984" y="70.39999999999999" width="13.5" height="2.4" fill="#d6d6d6"/><rect x="979.1" y="74.8" width="2.6" height="2.6" fill="#d6d6d6"/><rect x="984" y="74.89999999999999" width="13.5" height="2.4" fill="#d6d6d6"/><rect x="979.1" y="79.3" width="2.6" height="2.6" fill="#d6d6d6"/><rect x="984" y="79.39999999999999" width="13.5" height="2.4" fill="#d6d6d6"/><path d="M1016.3,65.9 L1035,65.9 L1035,82.9" stroke="#d6d6d6" stroke-width="1.5" fill="none"/><rect x="1014" y="68" width="19" height="16.6" fill="#535353" stroke="#d6d6d6" stroke-width="1.8"/><rect x="1016.9" y="70.5" width="2.3" height="2.3" fill="#d6d6d6"/><rect x="1021.2" y="70.5" width="9" height="2.2" fill="#d6d6d6"/><rect x="1016.9" y="75.0" width="2.3" height="2.3" fill="#d6d6d6"/><rect x="1021.2" y="75.0" width="9" height="2.2" fill="#d6d6d6"/><rect x="1016.9" y="79.5" width="2.3" height="2.3" fill="#d6d6d6"/><rect x="1021.2" y="79.5" width="9" height="2.2" fill="#d6d6d6"/><path d="M1707.5,71.8 L1711.3,75.5 L1715.2,71.8 M1707.5,77.5 L1711.3,81.2 L1715.2,77.5" stroke="#333" stroke-width="1.3" fill="none"/><polygon points="1699.6,39 1711.4,39 1710.6,43.3 1698.8,43.3" fill="#fff"/><polygon points="1693.2,45.4 1708.2,45.4 1707.4,49.6 1692.4,49.6" fill="#fff"/><polygon points="1696.4,50.9 1709.2,50.9 1708.4,54.8 1695.6,54.8" fill="#fff"/></svg>
<div class="t" style="left:117.30px;top:81.28px;font-size:9px;color:#c8c8c8;font-weight:bold;">HTML</div>
<div class="t" style="left:173.90px;top:65.87px;font-size:12.2px;color:#d6d6d6;font-weight:bold;letter-spacing:-0.3px;">XML</div>
<div class="t" style="left:181.80px;top:76.63px;font-size:10px;color:#d6d6d6;font-weight:bold;">in</div>
<div class="t" style="left:565.10px;top:78.91px;font-size:10.5px;color:#cccccc;font-weight:bold;">3</div>
<div class="t" style="left:624.90px;top:77.41px;font-size:10.5px;color:#cccccc;font-weight:bold;">1</div>
<div class="t" style="left:829.00px;top:77.81px;font-size:10.5px;color:#cccccc;font-weight:bold;">1</div>
<div class="t" style="left:706.00px;top:68.07px;font-size:11.5px;color:#d6d6d6;font-weight:bold;">M</div>
<div class="t" style="left:1074.50px;top:71.01px;font-size:11.8px;color:#c8c8c8;font-weight:bold;">IDS</div>
<div class="t" style="left:1642.70px;top:36.43px;font-size:21.7px;color:#ffffff;font-weight:bold;font-style:italic;-webkit-text-stroke:0.9px #fff;">ROB</div>
<div class="t" style="left:1710.00px;top:36.43px;font-size:21.7px;color:#ffffff;font-weight:bold;font-style:italic;-webkit-text-stroke:0.9px #fff;transform:scaleX(1.08);transform-origin:0 0;">X</div>
<div style="left:0.00px;top:0.00px;width:1732.00px;height:1.00px;background:#6b6b6b;"></div>
<div style="left:0.00px;top:0.00px;width:1.00px;height:994.00px;background:#6b6b6b;"></div>
<div style="left:1.00px;top:1.00px;width:1730.00px;height:1.00px;background:#1a5d9e;"></div>
<div style="left:1.00px;top:1.00px;width:1.00px;height:992.00px;background:#1a5d9e;"></div>
<div style="left:1730.00px;top:1.00px;width:1.00px;height:992.00px;background:#1a5d9e;"></div>
<div style="left:1731.00px;top:0.00px;width:1.00px;height:994.00px;background:#3c3c3c;"></div>
<div style="left:1.00px;top:992.00px;width:1730.00px;height:1.00px;background:#1a5d9e;"></div>
<div style="left:0.00px;top:993.00px;width:1732.00px;height:1.00px;background:#3c3c3c;"></div>
</body></html>
